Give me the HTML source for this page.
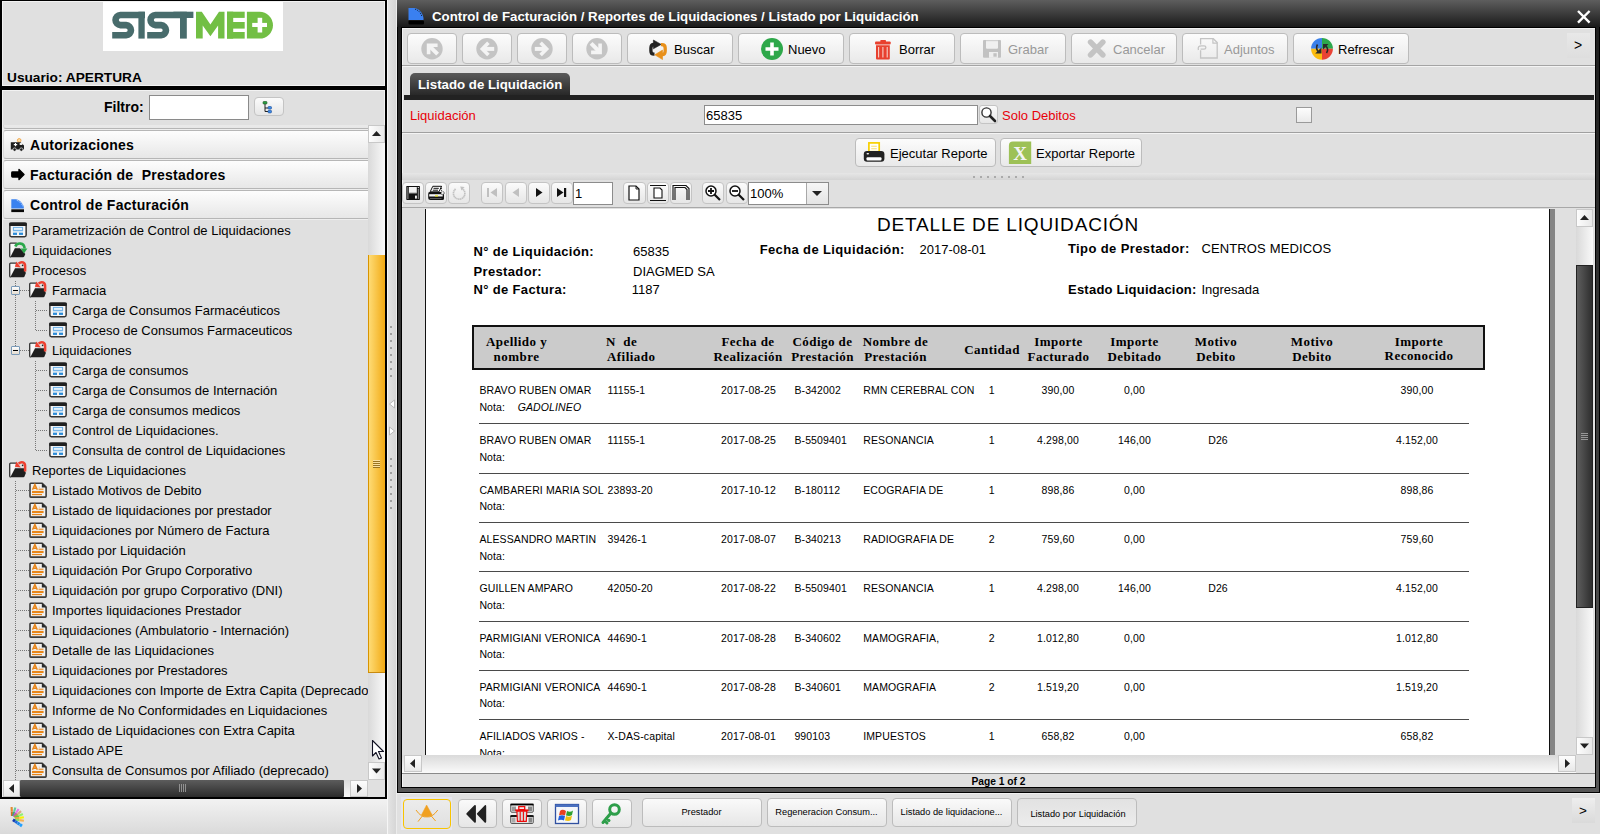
<!DOCTYPE html>
<html><head><meta charset="utf-8">
<style>
*{margin:0;padding:0;box-sizing:border-box}
html,body{width:1600px;height:834px;overflow:hidden;background:#e0e0e0;font-family:"Liberation Sans",sans-serif;color:#000;position:relative}
.a{position:absolute}
.t{position:absolute;white-space:pre}
.btn{position:absolute;border:1px solid #bcbcbc;border-radius:4px;background:linear-gradient(#fcfcfc,#e9e9e9)}
.sbtn{position:absolute;border:1px solid #c4c4c4;border-radius:3px;background:linear-gradient(#fbfbfb,#e6e6e6)}
svg{overflow:visible}
</style></head><body>
<div class="a" style="left:0px;top:0px;width:387px;height:799px;background:#000"></div>
<div class="a" style="left:2px;top:1px;width:383px;height:85px;background:#e0e0e0;border:1px solid #f2f2f2"></div>
<div class="a" style="left:2px;top:90px;width:383px;height:707px;background:#e0e0e0;border-top:1px solid #f2f2f2;border-left:1px solid #f2f2f2;border-right:1px solid #f2f2f2"></div>
<div class="a" style="left:0px;top:799px;width:387px;height:35px;background:linear-gradient(#f2f2f2,#dadada)"></div>
<div class="a" style="left:387px;top:0px;width:10px;height:834px;background:linear-gradient(90deg,#f6f6f6 0,#f6f6f6 1px,#e3e3e3 1px,#d6d6d6 9px,#ececec 9px)"></div>
<svg class="a" style="left:103px;top:2px" width="180" height="49" viewBox="103 2 180 49">
<rect x="103" y="2" width="180" height="49" fill="#fff"/>
<g fill="none" stroke="#486c6c" stroke-width="6.6">
<path d="M145,15 H120.4 A5.08,5.08 0 0 0 120.4,25.15 H126.1 A5.08,5.08 0 0 1 126.1,35.3 H112.2"/>
<path d="M180,15 H155.4 A5.08,5.08 0 0 0 155.4,25.15 H161.1 A5.08,5.08 0 0 1 161.1,35.3 H147.2"/>
</g>
<g fill="#486c6c">
<rect x="138.4" y="11.7" width="6.3" height="26.9"/>
<rect x="173.4" y="11.7" width="20" height="6.3"/>
<rect x="180" y="11.7" width="6.8" height="26.9"/>
</g>
<g fill="#72bf44">
<polygon points="196,11.7 201.8,11.7 210.4,24.6 219,11.7 224.5,11.7 224.5,38.6 218.1,38.6 218.1,25.5 210.4,36.3 202.7,25.5 202.7,38.6 196,38.6"/>
<rect x="227" y="11.7" width="6.2" height="26.9"/>
<rect x="227" y="11.7" width="17.7" height="6.2"/>
<rect x="227" y="22" width="17.7" height="6.6"/>
<rect x="227" y="32" width="17.7" height="6.6"/>
<path d="M246.9,11.7 H259.5 A13.45,13.45 0 0 1 259.5,38.6 H246.9 Z"/>
</g>
<g fill="#fff"><rect x="257.6" y="17.8" width="4.6" height="14.7"/><rect x="252.2" y="22.9" width="14.8" height="4.1"/></g>
</svg>
<div class="t" style="left:7px;top:69.90px;font-size:13.7px;font-weight:700;color:#000;font-family:'Liberation Sans';line-height:normal;">Usuario: APERTURA</div>
<div class="t" style="left:104px;top:99.33px;font-size:14px;font-weight:700;color:#000;font-family:'Liberation Sans';line-height:normal;">Filtro:</div>
<div class="a" style="left:149px;top:95px;width:100px;height:25px;background:#fff;border:1px solid #8a8a8a"></div>
<div class="sbtn" style="left:254px;top:97px;width:30px;height:19px;border-radius:4px"></div>
<svg class="a" style="left:254px;top:97px" width="30" height="19" viewBox="0 0 30 19"><rect x="9" y="4.5" width="4" height="2.5" rx="0.8" fill="#2aa040" stroke="#185020" stroke-width="0.6"/><path d="M11,7 V14.5 H14 M11,11 H14" stroke="#222" stroke-width="1" fill="none"/><rect x="14" y="9.5" width="3.5" height="2.6" rx="0.8" fill="#3a88e8" stroke="#1a4a90" stroke-width="0.6"/><rect x="14" y="13.3" width="3.5" height="2.6" rx="0.8" fill="#3a88e8" stroke="#1a4a90" stroke-width="0.6"/></svg>
<div class="a" style="left:3px;top:125px;width:365px;height:655px;overflow:hidden">
<div class="a" style="left:0px;top:0px;width:365px;height:95px;background:#eeeeee"></div>
<div class="a" style="left:0;top:-25px;width:365px;height:29px;border-top:1px solid #b6b6b6;border-bottom:1px solid #b6b6b6;border-left:1px solid #dadada;border-radius:3px 0 0 3px;background:linear-gradient(#fdfdfd,#e7e7e7)"></div>
<div class="a" style="left:0;top:5px;width:365px;height:29px;border-top:1px solid #b6b6b6;border-bottom:1px solid #b6b6b6;border-left:1px solid #dadada;border-radius:3px 0 0 3px;background:linear-gradient(#fdfdfd,#e7e7e7)"></div>
<div class="a" style="left:5px;top:9px;width:16px;height:29px"><svg width="16" height="28" viewBox="0 0 16 28"><circle cx="11.2" cy="6.4" r="1.8" fill="#f8e0b0" stroke="#f0a040" stroke-width="0.9"/><path d="M2.8,8.2 H12.5 L16,11.5 V15.4 H2.8 Z" fill="#1e1e1e"/><circle cx="6.6" cy="15.6" r="1.7" fill="#1e1e1e" stroke="#eee" stroke-width="0.7"/><circle cx="13.3" cy="15.6" r="1.7" fill="#1e1e1e" stroke="#eee" stroke-width="0.7"/><path d="M5.8,10.6 H9.2 M7.5,8.9 V12.3" stroke="#fff" stroke-width="1.1"/><ellipse cx="13" cy="10.1" rx="1.6" ry="1" fill="#fff"/></svg></div>
<div class="t" style="left:27px;top:12.23px;font-size:14px;font-weight:700;color:#000;font-family:'Liberation Sans';line-height:normal;letter-spacing:0.27px">Autorizaciones</div>
<div class="a" style="left:0;top:35px;width:365px;height:29px;border-top:1px solid #b6b6b6;border-bottom:1px solid #b6b6b6;border-left:1px solid #dadada;border-radius:3px 0 0 3px;background:linear-gradient(#fdfdfd,#e7e7e7)"></div>
<div class="a" style="left:5px;top:35px;width:16px;height:29px"><svg width="16" height="28" viewBox="0 0 16 28"><path d="M4.5,12 H11 V9.5 L16,14.5 L11,19.5 V17 H4.5 Q3.8,17 3.8,16.3 V12.7 Q3.8,12 4.5,12 Z" fill="#000" stroke="#000" stroke-width="1.4" stroke-linejoin="round"/></svg></div>
<div class="t" style="left:27px;top:42.23px;font-size:14px;font-weight:700;color:#000;font-family:'Liberation Sans';line-height:normal;letter-spacing:0.27px">Facturación de  Prestadores</div>
<div class="a" style="left:0;top:65px;width:365px;height:29px;border-top:1px solid #b6b6b6;border-bottom:1px solid #b6b6b6;border-left:1px solid #dadada;border-radius:3px 0 0 3px;background:linear-gradient(#fdfdfd,#e7e7e7)"></div>
<div class="a" style="left:5px;top:71px;width:16px;height:29px"><svg width="16" height="28" viewBox="0 0 16 28"><path d="M3.3,3.3 H8 C11,3.5 14.5,7 15.8,10.5 V12.4 H3.3 Z" fill="#3a82f0"/><path d="M8.8,4.3 C11.5,5.3 13.8,7.6 15,10.4" stroke="#e8f0ff" stroke-width="0.9" stroke-dasharray="1 1" fill="none"/><rect x="3.3" y="13.3" width="12.7" height="2.8" fill="#080808"/></svg></div>
<div class="t" style="left:27px;top:71.83px;font-size:14px;font-weight:700;color:#000;font-family:'Liberation Sans';line-height:normal;letter-spacing:0.27px">Control de Facturación</div>
</div>
<div class="a" style="left:3px;top:219px;width:365px;height:561px;overflow:hidden">
<div class="a" style="left:6px;top:3px;width:19px;height:17px"><svg width="19" height="17" viewBox="0 -8 19 17" style="overflow:visible"><rect x="0.85" y="-6.85" width="16.3" height="13.5" rx="1.6" fill="#f6f6f6" stroke="#333" stroke-width="1.5"/><rect x="0.2" y="-7.6" width="17.6" height="3.7" rx="1" fill="#1e1e1e"/><rect x="4.4" y="-2.6" width="9.2" height="3" fill="#e6f2fb" stroke="#6aaee6" stroke-width="1"/><rect x="4" y="1" width="10" height="1.4" fill="#cfe3f3"/><rect x="4" y="2.7" width="4" height="2.2" fill="#2a8ad8"/><rect x="10" y="2.7" width="4" height="2.2" fill="#2a8ad8"/></svg></div>
<div class="t" style="left:29px;top:3.83px;font-size:13px;font-weight:400;color:#000;font-family:'Liberation Sans';line-height:normal;">Parametrización de Control de Liquidaciones</div>
<div class="a" style="left:6px;top:23px;width:19px;height:17px"><svg width="19" height="17" viewBox="0 -8 19 17" style="overflow:visible"><path d="M7.8,-6.9 H1.6 Q0.7,-6.9 0.7,-6 V6 Q0.7,7 1.7,7" fill="#f8f8f8" stroke="#333" stroke-width="1.3"/><path d="M1.3,7.2 L5.9,-1.8 H10.9 L16.3,4 L15.2,6.4 Q14.8,7.2 14,7.2 Z" fill="#1e1e1e"/><path d="M6.3,-3.5 C8,-7.6 15.3,-7.8 15.6,-1.5" stroke="#2aa84a" stroke-width="2.6" fill="none"/><path d="M11.6,-1.6 H18.4 L15,3.6 Z" fill="#2aa84a"/></svg></div>
<div class="t" style="left:29px;top:23.83px;font-size:13px;font-weight:400;color:#000;font-family:'Liberation Sans';line-height:normal;">Liquidaciones</div>
<div class="a" style="left:6px;top:43px;width:19px;height:17px"><svg width="19" height="17" viewBox="0 -8 19 17" style="overflow:visible"><path d="M7.8,-6.9 H1.6 Q0.7,-6.9 0.7,-6 V6 Q0.7,7 1.7,7" fill="#f8f8f8" stroke="#333" stroke-width="1.3"/><path d="M1.3,7.2 L6.1,-1.7 H14.8 L16.9,2.9 L15.6,6.2 Q15.2,7.2 14.4,7.2 Z" fill="#1e1e1e"/><path d="M16.1,1.6 V-4 C16.1,-7.6 12.6,-9.2 9.6,-6.4" stroke="#ee4030" stroke-width="2.5" fill="none"/><path d="M7.4,-8.6 L5.9,-3.2 L11.8,-2.6 Z" fill="#ee4030"/><circle cx="13.6" cy="-4.6" r="0.8" fill="#222"/></svg></div>
<div class="t" style="left:29px;top:43.84px;font-size:13px;font-weight:400;color:#000;font-family:'Liberation Sans';line-height:normal;">Procesos</div>
<div class="a" style="left:26px;top:63px;width:19px;height:17px"><svg width="19" height="17" viewBox="0 -8 19 17" style="overflow:visible"><path d="M7.8,-6.9 H1.6 Q0.7,-6.9 0.7,-6 V6 Q0.7,7 1.7,7" fill="#f8f8f8" stroke="#333" stroke-width="1.3"/><path d="M1.3,7.2 L6.1,-1.7 H14.8 L16.9,2.9 L15.6,6.2 Q15.2,7.2 14.4,7.2 Z" fill="#1e1e1e"/><path d="M16.1,1.6 V-4 C16.1,-7.6 12.6,-9.2 9.6,-6.4" stroke="#ee4030" stroke-width="2.5" fill="none"/><path d="M7.4,-8.6 L5.9,-3.2 L11.8,-2.6 Z" fill="#ee4030"/><circle cx="13.6" cy="-4.6" r="0.8" fill="#222"/></svg></div>
<div class="t" style="left:49px;top:63.84px;font-size:13px;font-weight:400;color:#000;font-family:'Liberation Sans';line-height:normal;">Farmacia</div>
<div class="a" style="left:46px;top:83px;width:19px;height:17px"><svg width="19" height="17" viewBox="0 -8 19 17" style="overflow:visible"><rect x="0.85" y="-6.85" width="16.3" height="13.5" rx="1.6" fill="#f6f6f6" stroke="#333" stroke-width="1.5"/><rect x="0.2" y="-7.6" width="17.6" height="3.7" rx="1" fill="#1e1e1e"/><rect x="4.4" y="-2.6" width="9.2" height="3" fill="#e6f2fb" stroke="#6aaee6" stroke-width="1"/><rect x="4" y="1" width="10" height="1.4" fill="#cfe3f3"/><rect x="4" y="2.7" width="4" height="2.2" fill="#2a8ad8"/><rect x="10" y="2.7" width="4" height="2.2" fill="#2a8ad8"/></svg></div>
<div class="t" style="left:69px;top:83.84px;font-size:13px;font-weight:400;color:#000;font-family:'Liberation Sans';line-height:normal;">Carga de Consumos Farmacéuticos</div>
<div class="a" style="left:46px;top:103px;width:19px;height:17px"><svg width="19" height="17" viewBox="0 -8 19 17" style="overflow:visible"><rect x="0.85" y="-6.85" width="16.3" height="13.5" rx="1.6" fill="#f6f6f6" stroke="#333" stroke-width="1.5"/><rect x="0.2" y="-7.6" width="17.6" height="3.7" rx="1" fill="#1e1e1e"/><rect x="4.4" y="-2.6" width="9.2" height="3" fill="#e6f2fb" stroke="#6aaee6" stroke-width="1"/><rect x="4" y="1" width="10" height="1.4" fill="#cfe3f3"/><rect x="4" y="2.7" width="4" height="2.2" fill="#2a8ad8"/><rect x="10" y="2.7" width="4" height="2.2" fill="#2a8ad8"/></svg></div>
<div class="t" style="left:69px;top:103.84px;font-size:13px;font-weight:400;color:#000;font-family:'Liberation Sans';line-height:normal;">Proceso de Consumos Farmaceuticos</div>
<div class="a" style="left:26px;top:123px;width:19px;height:17px"><svg width="19" height="17" viewBox="0 -8 19 17" style="overflow:visible"><path d="M7.8,-6.9 H1.6 Q0.7,-6.9 0.7,-6 V6 Q0.7,7 1.7,7" fill="#f8f8f8" stroke="#333" stroke-width="1.3"/><path d="M1.3,7.2 L6.1,-1.7 H14.8 L16.9,2.9 L15.6,6.2 Q15.2,7.2 14.4,7.2 Z" fill="#1e1e1e"/><path d="M16.1,1.6 V-4 C16.1,-7.6 12.6,-9.2 9.6,-6.4" stroke="#ee4030" stroke-width="2.5" fill="none"/><path d="M7.4,-8.6 L5.9,-3.2 L11.8,-2.6 Z" fill="#ee4030"/><circle cx="13.6" cy="-4.6" r="0.8" fill="#222"/></svg></div>
<div class="t" style="left:49px;top:123.84px;font-size:13px;font-weight:400;color:#000;font-family:'Liberation Sans';line-height:normal;">Liquidaciones</div>
<div class="a" style="left:46px;top:143px;width:19px;height:17px"><svg width="19" height="17" viewBox="0 -8 19 17" style="overflow:visible"><rect x="0.85" y="-6.85" width="16.3" height="13.5" rx="1.6" fill="#f6f6f6" stroke="#333" stroke-width="1.5"/><rect x="0.2" y="-7.6" width="17.6" height="3.7" rx="1" fill="#1e1e1e"/><rect x="4.4" y="-2.6" width="9.2" height="3" fill="#e6f2fb" stroke="#6aaee6" stroke-width="1"/><rect x="4" y="1" width="10" height="1.4" fill="#cfe3f3"/><rect x="4" y="2.7" width="4" height="2.2" fill="#2a8ad8"/><rect x="10" y="2.7" width="4" height="2.2" fill="#2a8ad8"/></svg></div>
<div class="t" style="left:69px;top:143.84px;font-size:13px;font-weight:400;color:#000;font-family:'Liberation Sans';line-height:normal;">Carga de consumos</div>
<div class="a" style="left:46px;top:163px;width:19px;height:17px"><svg width="19" height="17" viewBox="0 -8 19 17" style="overflow:visible"><rect x="0.85" y="-6.85" width="16.3" height="13.5" rx="1.6" fill="#f6f6f6" stroke="#333" stroke-width="1.5"/><rect x="0.2" y="-7.6" width="17.6" height="3.7" rx="1" fill="#1e1e1e"/><rect x="4.4" y="-2.6" width="9.2" height="3" fill="#e6f2fb" stroke="#6aaee6" stroke-width="1"/><rect x="4" y="1" width="10" height="1.4" fill="#cfe3f3"/><rect x="4" y="2.7" width="4" height="2.2" fill="#2a8ad8"/><rect x="10" y="2.7" width="4" height="2.2" fill="#2a8ad8"/></svg></div>
<div class="t" style="left:69px;top:163.84px;font-size:13px;font-weight:400;color:#000;font-family:'Liberation Sans';line-height:normal;">Carga de Consumos de Internación</div>
<div class="a" style="left:46px;top:183px;width:19px;height:17px"><svg width="19" height="17" viewBox="0 -8 19 17" style="overflow:visible"><rect x="0.85" y="-6.85" width="16.3" height="13.5" rx="1.6" fill="#f6f6f6" stroke="#333" stroke-width="1.5"/><rect x="0.2" y="-7.6" width="17.6" height="3.7" rx="1" fill="#1e1e1e"/><rect x="4.4" y="-2.6" width="9.2" height="3" fill="#e6f2fb" stroke="#6aaee6" stroke-width="1"/><rect x="4" y="1" width="10" height="1.4" fill="#cfe3f3"/><rect x="4" y="2.7" width="4" height="2.2" fill="#2a8ad8"/><rect x="10" y="2.7" width="4" height="2.2" fill="#2a8ad8"/></svg></div>
<div class="t" style="left:69px;top:183.84px;font-size:13px;font-weight:400;color:#000;font-family:'Liberation Sans';line-height:normal;">Carga de consumos medicos</div>
<div class="a" style="left:46px;top:203px;width:19px;height:17px"><svg width="19" height="17" viewBox="0 -8 19 17" style="overflow:visible"><rect x="0.85" y="-6.85" width="16.3" height="13.5" rx="1.6" fill="#f6f6f6" stroke="#333" stroke-width="1.5"/><rect x="0.2" y="-7.6" width="17.6" height="3.7" rx="1" fill="#1e1e1e"/><rect x="4.4" y="-2.6" width="9.2" height="3" fill="#e6f2fb" stroke="#6aaee6" stroke-width="1"/><rect x="4" y="1" width="10" height="1.4" fill="#cfe3f3"/><rect x="4" y="2.7" width="4" height="2.2" fill="#2a8ad8"/><rect x="10" y="2.7" width="4" height="2.2" fill="#2a8ad8"/></svg></div>
<div class="t" style="left:69px;top:203.84px;font-size:13px;font-weight:400;color:#000;font-family:'Liberation Sans';line-height:normal;">Control de Liquidaciones.</div>
<div class="a" style="left:46px;top:223px;width:19px;height:17px"><svg width="19" height="17" viewBox="0 -8 19 17" style="overflow:visible"><rect x="0.85" y="-6.85" width="16.3" height="13.5" rx="1.6" fill="#f6f6f6" stroke="#333" stroke-width="1.5"/><rect x="0.2" y="-7.6" width="17.6" height="3.7" rx="1" fill="#1e1e1e"/><rect x="4.4" y="-2.6" width="9.2" height="3" fill="#e6f2fb" stroke="#6aaee6" stroke-width="1"/><rect x="4" y="1" width="10" height="1.4" fill="#cfe3f3"/><rect x="4" y="2.7" width="4" height="2.2" fill="#2a8ad8"/><rect x="10" y="2.7" width="4" height="2.2" fill="#2a8ad8"/></svg></div>
<div class="t" style="left:69px;top:223.84px;font-size:13px;font-weight:400;color:#000;font-family:'Liberation Sans';line-height:normal;">Consulta de control de Liquidaciones</div>
<div class="a" style="left:6px;top:243px;width:19px;height:17px"><svg width="19" height="17" viewBox="0 -8 19 17" style="overflow:visible"><path d="M7.8,-6.9 H1.6 Q0.7,-6.9 0.7,-6 V6 Q0.7,7 1.7,7" fill="#f8f8f8" stroke="#333" stroke-width="1.3"/><path d="M1.3,7.2 L6.1,-1.7 H14.8 L16.9,2.9 L15.6,6.2 Q15.2,7.2 14.4,7.2 Z" fill="#1e1e1e"/><path d="M16.1,1.6 V-4 C16.1,-7.6 12.6,-9.2 9.6,-6.4" stroke="#ee4030" stroke-width="2.5" fill="none"/><path d="M7.4,-8.6 L5.9,-3.2 L11.8,-2.6 Z" fill="#ee4030"/><circle cx="13.6" cy="-4.6" r="0.8" fill="#222"/></svg></div>
<div class="t" style="left:29px;top:243.84px;font-size:13px;font-weight:400;color:#000;font-family:'Liberation Sans';line-height:normal;">Reportes de Liquidaciones</div>
<div class="a" style="left:26px;top:263px;width:19px;height:17px"><svg width="19" height="17" viewBox="0 -8 19 17" style="overflow:visible"><path d="M1.8,-6.8 H13.2 L17.1,-2.9 V6.3 Q17.1,7.1 16.3,7.1 H1.8 Q1,7.1 1,6.3 V-6 Q1,-6.8 1.8,-6.8 Z" fill="#f1f1f1" stroke="#3a3a3a" stroke-width="1.6" stroke-linejoin="round"/><path d="M12.8,-7 L17.3,-2.5 L12.8,-2.5 Z" fill="#2a2a2a"/><path d="M3.5,-0.2 L5.9,-5.4 L8.3,-0.2 M4.5,-1.8 H7.3" stroke="#e8861a" stroke-width="1.5" fill="none"/><path d="M9.5,-0.8 H14.5" stroke="#e8861a" stroke-width="1.1"/><path d="M9.8,-2.8 H11" stroke="#f0b070" stroke-width="0.8"/><path d="M3,2 H14.6" stroke="#e8861a" stroke-width="2.2"/><path d="M3,4.6 H13" stroke="#e8861a" stroke-width="1.2"/></svg></div>
<div class="t" style="left:49px;top:263.84px;font-size:13px;font-weight:400;color:#000;font-family:'Liberation Sans';line-height:normal;">Listado Motivos de Debito</div>
<div class="a" style="left:26px;top:283px;width:19px;height:17px"><svg width="19" height="17" viewBox="0 -8 19 17" style="overflow:visible"><path d="M1.8,-6.8 H13.2 L17.1,-2.9 V6.3 Q17.1,7.1 16.3,7.1 H1.8 Q1,7.1 1,6.3 V-6 Q1,-6.8 1.8,-6.8 Z" fill="#f1f1f1" stroke="#3a3a3a" stroke-width="1.6" stroke-linejoin="round"/><path d="M12.8,-7 L17.3,-2.5 L12.8,-2.5 Z" fill="#2a2a2a"/><path d="M3.5,-0.2 L5.9,-5.4 L8.3,-0.2 M4.5,-1.8 H7.3" stroke="#e8861a" stroke-width="1.5" fill="none"/><path d="M9.5,-0.8 H14.5" stroke="#e8861a" stroke-width="1.1"/><path d="M9.8,-2.8 H11" stroke="#f0b070" stroke-width="0.8"/><path d="M3,2 H14.6" stroke="#e8861a" stroke-width="2.2"/><path d="M3,4.6 H13" stroke="#e8861a" stroke-width="1.2"/></svg></div>
<div class="t" style="left:49px;top:283.84px;font-size:13px;font-weight:400;color:#000;font-family:'Liberation Sans';line-height:normal;">Listado de liquidaciones por prestador</div>
<div class="a" style="left:26px;top:303px;width:19px;height:17px"><svg width="19" height="17" viewBox="0 -8 19 17" style="overflow:visible"><path d="M1.8,-6.8 H13.2 L17.1,-2.9 V6.3 Q17.1,7.1 16.3,7.1 H1.8 Q1,7.1 1,6.3 V-6 Q1,-6.8 1.8,-6.8 Z" fill="#f1f1f1" stroke="#3a3a3a" stroke-width="1.6" stroke-linejoin="round"/><path d="M12.8,-7 L17.3,-2.5 L12.8,-2.5 Z" fill="#2a2a2a"/><path d="M3.5,-0.2 L5.9,-5.4 L8.3,-0.2 M4.5,-1.8 H7.3" stroke="#e8861a" stroke-width="1.5" fill="none"/><path d="M9.5,-0.8 H14.5" stroke="#e8861a" stroke-width="1.1"/><path d="M9.8,-2.8 H11" stroke="#f0b070" stroke-width="0.8"/><path d="M3,2 H14.6" stroke="#e8861a" stroke-width="2.2"/><path d="M3,4.6 H13" stroke="#e8861a" stroke-width="1.2"/></svg></div>
<div class="t" style="left:49px;top:303.84px;font-size:13px;font-weight:400;color:#000;font-family:'Liberation Sans';line-height:normal;">Liquidaciones por Número de Factura</div>
<div class="a" style="left:26px;top:323px;width:19px;height:17px"><svg width="19" height="17" viewBox="0 -8 19 17" style="overflow:visible"><path d="M1.8,-6.8 H13.2 L17.1,-2.9 V6.3 Q17.1,7.1 16.3,7.1 H1.8 Q1,7.1 1,6.3 V-6 Q1,-6.8 1.8,-6.8 Z" fill="#f1f1f1" stroke="#3a3a3a" stroke-width="1.6" stroke-linejoin="round"/><path d="M12.8,-7 L17.3,-2.5 L12.8,-2.5 Z" fill="#2a2a2a"/><path d="M3.5,-0.2 L5.9,-5.4 L8.3,-0.2 M4.5,-1.8 H7.3" stroke="#e8861a" stroke-width="1.5" fill="none"/><path d="M9.5,-0.8 H14.5" stroke="#e8861a" stroke-width="1.1"/><path d="M9.8,-2.8 H11" stroke="#f0b070" stroke-width="0.8"/><path d="M3,2 H14.6" stroke="#e8861a" stroke-width="2.2"/><path d="M3,4.6 H13" stroke="#e8861a" stroke-width="1.2"/></svg></div>
<div class="t" style="left:49px;top:323.84px;font-size:13px;font-weight:400;color:#000;font-family:'Liberation Sans';line-height:normal;">Listado por Liquidación</div>
<div class="a" style="left:26px;top:343px;width:19px;height:17px"><svg width="19" height="17" viewBox="0 -8 19 17" style="overflow:visible"><path d="M1.8,-6.8 H13.2 L17.1,-2.9 V6.3 Q17.1,7.1 16.3,7.1 H1.8 Q1,7.1 1,6.3 V-6 Q1,-6.8 1.8,-6.8 Z" fill="#f1f1f1" stroke="#3a3a3a" stroke-width="1.6" stroke-linejoin="round"/><path d="M12.8,-7 L17.3,-2.5 L12.8,-2.5 Z" fill="#2a2a2a"/><path d="M3.5,-0.2 L5.9,-5.4 L8.3,-0.2 M4.5,-1.8 H7.3" stroke="#e8861a" stroke-width="1.5" fill="none"/><path d="M9.5,-0.8 H14.5" stroke="#e8861a" stroke-width="1.1"/><path d="M9.8,-2.8 H11" stroke="#f0b070" stroke-width="0.8"/><path d="M3,2 H14.6" stroke="#e8861a" stroke-width="2.2"/><path d="M3,4.6 H13" stroke="#e8861a" stroke-width="1.2"/></svg></div>
<div class="t" style="left:49px;top:343.84px;font-size:13px;font-weight:400;color:#000;font-family:'Liberation Sans';line-height:normal;">Liquidación Por Grupo Corporativo</div>
<div class="a" style="left:26px;top:363px;width:19px;height:17px"><svg width="19" height="17" viewBox="0 -8 19 17" style="overflow:visible"><path d="M1.8,-6.8 H13.2 L17.1,-2.9 V6.3 Q17.1,7.1 16.3,7.1 H1.8 Q1,7.1 1,6.3 V-6 Q1,-6.8 1.8,-6.8 Z" fill="#f1f1f1" stroke="#3a3a3a" stroke-width="1.6" stroke-linejoin="round"/><path d="M12.8,-7 L17.3,-2.5 L12.8,-2.5 Z" fill="#2a2a2a"/><path d="M3.5,-0.2 L5.9,-5.4 L8.3,-0.2 M4.5,-1.8 H7.3" stroke="#e8861a" stroke-width="1.5" fill="none"/><path d="M9.5,-0.8 H14.5" stroke="#e8861a" stroke-width="1.1"/><path d="M9.8,-2.8 H11" stroke="#f0b070" stroke-width="0.8"/><path d="M3,2 H14.6" stroke="#e8861a" stroke-width="2.2"/><path d="M3,4.6 H13" stroke="#e8861a" stroke-width="1.2"/></svg></div>
<div class="t" style="left:49px;top:363.84px;font-size:13px;font-weight:400;color:#000;font-family:'Liberation Sans';line-height:normal;">Liquidación por grupo Corporativo (DNI)</div>
<div class="a" style="left:26px;top:383px;width:19px;height:17px"><svg width="19" height="17" viewBox="0 -8 19 17" style="overflow:visible"><path d="M1.8,-6.8 H13.2 L17.1,-2.9 V6.3 Q17.1,7.1 16.3,7.1 H1.8 Q1,7.1 1,6.3 V-6 Q1,-6.8 1.8,-6.8 Z" fill="#f1f1f1" stroke="#3a3a3a" stroke-width="1.6" stroke-linejoin="round"/><path d="M12.8,-7 L17.3,-2.5 L12.8,-2.5 Z" fill="#2a2a2a"/><path d="M3.5,-0.2 L5.9,-5.4 L8.3,-0.2 M4.5,-1.8 H7.3" stroke="#e8861a" stroke-width="1.5" fill="none"/><path d="M9.5,-0.8 H14.5" stroke="#e8861a" stroke-width="1.1"/><path d="M9.8,-2.8 H11" stroke="#f0b070" stroke-width="0.8"/><path d="M3,2 H14.6" stroke="#e8861a" stroke-width="2.2"/><path d="M3,4.6 H13" stroke="#e8861a" stroke-width="1.2"/></svg></div>
<div class="t" style="left:49px;top:383.84px;font-size:13px;font-weight:400;color:#000;font-family:'Liberation Sans';line-height:normal;">Importes liquidaciones Prestador</div>
<div class="a" style="left:26px;top:403px;width:19px;height:17px"><svg width="19" height="17" viewBox="0 -8 19 17" style="overflow:visible"><path d="M1.8,-6.8 H13.2 L17.1,-2.9 V6.3 Q17.1,7.1 16.3,7.1 H1.8 Q1,7.1 1,6.3 V-6 Q1,-6.8 1.8,-6.8 Z" fill="#f1f1f1" stroke="#3a3a3a" stroke-width="1.6" stroke-linejoin="round"/><path d="M12.8,-7 L17.3,-2.5 L12.8,-2.5 Z" fill="#2a2a2a"/><path d="M3.5,-0.2 L5.9,-5.4 L8.3,-0.2 M4.5,-1.8 H7.3" stroke="#e8861a" stroke-width="1.5" fill="none"/><path d="M9.5,-0.8 H14.5" stroke="#e8861a" stroke-width="1.1"/><path d="M9.8,-2.8 H11" stroke="#f0b070" stroke-width="0.8"/><path d="M3,2 H14.6" stroke="#e8861a" stroke-width="2.2"/><path d="M3,4.6 H13" stroke="#e8861a" stroke-width="1.2"/></svg></div>
<div class="t" style="left:49px;top:403.84px;font-size:13px;font-weight:400;color:#000;font-family:'Liberation Sans';line-height:normal;">Liquidaciones (Ambulatorio - Internación)</div>
<div class="a" style="left:26px;top:423px;width:19px;height:17px"><svg width="19" height="17" viewBox="0 -8 19 17" style="overflow:visible"><path d="M1.8,-6.8 H13.2 L17.1,-2.9 V6.3 Q17.1,7.1 16.3,7.1 H1.8 Q1,7.1 1,6.3 V-6 Q1,-6.8 1.8,-6.8 Z" fill="#f1f1f1" stroke="#3a3a3a" stroke-width="1.6" stroke-linejoin="round"/><path d="M12.8,-7 L17.3,-2.5 L12.8,-2.5 Z" fill="#2a2a2a"/><path d="M3.5,-0.2 L5.9,-5.4 L8.3,-0.2 M4.5,-1.8 H7.3" stroke="#e8861a" stroke-width="1.5" fill="none"/><path d="M9.5,-0.8 H14.5" stroke="#e8861a" stroke-width="1.1"/><path d="M9.8,-2.8 H11" stroke="#f0b070" stroke-width="0.8"/><path d="M3,2 H14.6" stroke="#e8861a" stroke-width="2.2"/><path d="M3,4.6 H13" stroke="#e8861a" stroke-width="1.2"/></svg></div>
<div class="t" style="left:49px;top:423.84px;font-size:13px;font-weight:400;color:#000;font-family:'Liberation Sans';line-height:normal;">Detalle de las Liquidaciones</div>
<div class="a" style="left:26px;top:443px;width:19px;height:17px"><svg width="19" height="17" viewBox="0 -8 19 17" style="overflow:visible"><path d="M1.8,-6.8 H13.2 L17.1,-2.9 V6.3 Q17.1,7.1 16.3,7.1 H1.8 Q1,7.1 1,6.3 V-6 Q1,-6.8 1.8,-6.8 Z" fill="#f1f1f1" stroke="#3a3a3a" stroke-width="1.6" stroke-linejoin="round"/><path d="M12.8,-7 L17.3,-2.5 L12.8,-2.5 Z" fill="#2a2a2a"/><path d="M3.5,-0.2 L5.9,-5.4 L8.3,-0.2 M4.5,-1.8 H7.3" stroke="#e8861a" stroke-width="1.5" fill="none"/><path d="M9.5,-0.8 H14.5" stroke="#e8861a" stroke-width="1.1"/><path d="M9.8,-2.8 H11" stroke="#f0b070" stroke-width="0.8"/><path d="M3,2 H14.6" stroke="#e8861a" stroke-width="2.2"/><path d="M3,4.6 H13" stroke="#e8861a" stroke-width="1.2"/></svg></div>
<div class="t" style="left:49px;top:443.84px;font-size:13px;font-weight:400;color:#000;font-family:'Liberation Sans';line-height:normal;">Liquidaciones por Prestadores</div>
<div class="a" style="left:26px;top:463px;width:19px;height:17px"><svg width="19" height="17" viewBox="0 -8 19 17" style="overflow:visible"><path d="M1.8,-6.8 H13.2 L17.1,-2.9 V6.3 Q17.1,7.1 16.3,7.1 H1.8 Q1,7.1 1,6.3 V-6 Q1,-6.8 1.8,-6.8 Z" fill="#f1f1f1" stroke="#3a3a3a" stroke-width="1.6" stroke-linejoin="round"/><path d="M12.8,-7 L17.3,-2.5 L12.8,-2.5 Z" fill="#2a2a2a"/><path d="M3.5,-0.2 L5.9,-5.4 L8.3,-0.2 M4.5,-1.8 H7.3" stroke="#e8861a" stroke-width="1.5" fill="none"/><path d="M9.5,-0.8 H14.5" stroke="#e8861a" stroke-width="1.1"/><path d="M9.8,-2.8 H11" stroke="#f0b070" stroke-width="0.8"/><path d="M3,2 H14.6" stroke="#e8861a" stroke-width="2.2"/><path d="M3,4.6 H13" stroke="#e8861a" stroke-width="1.2"/></svg></div>
<div class="t" style="left:49px;top:463.84px;font-size:13px;font-weight:400;color:#000;font-family:'Liberation Sans';line-height:normal;">Liquidaciones con Importe de Extra Capita (Deprecado)</div>
<div class="a" style="left:26px;top:483px;width:19px;height:17px"><svg width="19" height="17" viewBox="0 -8 19 17" style="overflow:visible"><path d="M1.8,-6.8 H13.2 L17.1,-2.9 V6.3 Q17.1,7.1 16.3,7.1 H1.8 Q1,7.1 1,6.3 V-6 Q1,-6.8 1.8,-6.8 Z" fill="#f1f1f1" stroke="#3a3a3a" stroke-width="1.6" stroke-linejoin="round"/><path d="M12.8,-7 L17.3,-2.5 L12.8,-2.5 Z" fill="#2a2a2a"/><path d="M3.5,-0.2 L5.9,-5.4 L8.3,-0.2 M4.5,-1.8 H7.3" stroke="#e8861a" stroke-width="1.5" fill="none"/><path d="M9.5,-0.8 H14.5" stroke="#e8861a" stroke-width="1.1"/><path d="M9.8,-2.8 H11" stroke="#f0b070" stroke-width="0.8"/><path d="M3,2 H14.6" stroke="#e8861a" stroke-width="2.2"/><path d="M3,4.6 H13" stroke="#e8861a" stroke-width="1.2"/></svg></div>
<div class="t" style="left:49px;top:483.84px;font-size:13px;font-weight:400;color:#000;font-family:'Liberation Sans';line-height:normal;">Informe de No Conformidades en Liquidaciones</div>
<div class="a" style="left:26px;top:503px;width:19px;height:17px"><svg width="19" height="17" viewBox="0 -8 19 17" style="overflow:visible"><path d="M1.8,-6.8 H13.2 L17.1,-2.9 V6.3 Q17.1,7.1 16.3,7.1 H1.8 Q1,7.1 1,6.3 V-6 Q1,-6.8 1.8,-6.8 Z" fill="#f1f1f1" stroke="#3a3a3a" stroke-width="1.6" stroke-linejoin="round"/><path d="M12.8,-7 L17.3,-2.5 L12.8,-2.5 Z" fill="#2a2a2a"/><path d="M3.5,-0.2 L5.9,-5.4 L8.3,-0.2 M4.5,-1.8 H7.3" stroke="#e8861a" stroke-width="1.5" fill="none"/><path d="M9.5,-0.8 H14.5" stroke="#e8861a" stroke-width="1.1"/><path d="M9.8,-2.8 H11" stroke="#f0b070" stroke-width="0.8"/><path d="M3,2 H14.6" stroke="#e8861a" stroke-width="2.2"/><path d="M3,4.6 H13" stroke="#e8861a" stroke-width="1.2"/></svg></div>
<div class="t" style="left:49px;top:503.84px;font-size:13px;font-weight:400;color:#000;font-family:'Liberation Sans';line-height:normal;">Listado de Liquidaciones con Extra Capita</div>
<div class="a" style="left:26px;top:523px;width:19px;height:17px"><svg width="19" height="17" viewBox="0 -8 19 17" style="overflow:visible"><path d="M1.8,-6.8 H13.2 L17.1,-2.9 V6.3 Q17.1,7.1 16.3,7.1 H1.8 Q1,7.1 1,6.3 V-6 Q1,-6.8 1.8,-6.8 Z" fill="#f1f1f1" stroke="#3a3a3a" stroke-width="1.6" stroke-linejoin="round"/><path d="M12.8,-7 L17.3,-2.5 L12.8,-2.5 Z" fill="#2a2a2a"/><path d="M3.5,-0.2 L5.9,-5.4 L8.3,-0.2 M4.5,-1.8 H7.3" stroke="#e8861a" stroke-width="1.5" fill="none"/><path d="M9.5,-0.8 H14.5" stroke="#e8861a" stroke-width="1.1"/><path d="M9.8,-2.8 H11" stroke="#f0b070" stroke-width="0.8"/><path d="M3,2 H14.6" stroke="#e8861a" stroke-width="2.2"/><path d="M3,4.6 H13" stroke="#e8861a" stroke-width="1.2"/></svg></div>
<div class="t" style="left:49px;top:523.84px;font-size:13px;font-weight:400;color:#000;font-family:'Liberation Sans';line-height:normal;">Listado APE</div>
<div class="a" style="left:26px;top:543px;width:19px;height:17px"><svg width="19" height="17" viewBox="0 -8 19 17" style="overflow:visible"><path d="M1.8,-6.8 H13.2 L17.1,-2.9 V6.3 Q17.1,7.1 16.3,7.1 H1.8 Q1,7.1 1,6.3 V-6 Q1,-6.8 1.8,-6.8 Z" fill="#f1f1f1" stroke="#3a3a3a" stroke-width="1.6" stroke-linejoin="round"/><path d="M12.8,-7 L17.3,-2.5 L12.8,-2.5 Z" fill="#2a2a2a"/><path d="M3.5,-0.2 L5.9,-5.4 L8.3,-0.2 M4.5,-1.8 H7.3" stroke="#e8861a" stroke-width="1.5" fill="none"/><path d="M9.5,-0.8 H14.5" stroke="#e8861a" stroke-width="1.1"/><path d="M9.8,-2.8 H11" stroke="#f0b070" stroke-width="0.8"/><path d="M3,2 H14.6" stroke="#e8861a" stroke-width="2.2"/><path d="M3,4.6 H13" stroke="#e8861a" stroke-width="1.2"/></svg></div>
<div class="t" style="left:49px;top:543.84px;font-size:13px;font-weight:400;color:#000;font-family:'Liberation Sans';line-height:normal;">Consulta de Consumos por Afiliado (deprecado)</div>
<div class="a" style="left:12px;top:62px;width:1px;height:70px;background:repeating-linear-gradient(#777 0 1px,transparent 1px 2px)"></div>
<div class="a" style="left:17px;top:71px;width:9px;height:1px;background:repeating-linear-gradient(90deg,#777 0 1px,transparent 1px 2px)"></div>
<div class="a" style="left:17px;top:131px;width:9px;height:1px;background:repeating-linear-gradient(90deg,#777 0 1px,transparent 1px 2px)"></div>
<div class="a" style="left:32px;top:82px;width:1px;height:30px;background:repeating-linear-gradient(#777 0 1px,transparent 1px 2px)"></div>
<div class="a" style="left:32px;top:142px;width:1px;height:90px;background:repeating-linear-gradient(#777 0 1px,transparent 1px 2px)"></div>
<div class="a" style="left:33px;top:91px;width:12px;height:1px;background:repeating-linear-gradient(90deg,#777 0 1px,transparent 1px 2px)"></div>
<div class="a" style="left:33px;top:111px;width:12px;height:1px;background:repeating-linear-gradient(90deg,#777 0 1px,transparent 1px 2px)"></div>
<div class="a" style="left:33px;top:151px;width:12px;height:1px;background:repeating-linear-gradient(90deg,#777 0 1px,transparent 1px 2px)"></div>
<div class="a" style="left:33px;top:171px;width:12px;height:1px;background:repeating-linear-gradient(90deg,#777 0 1px,transparent 1px 2px)"></div>
<div class="a" style="left:33px;top:191px;width:12px;height:1px;background:repeating-linear-gradient(90deg,#777 0 1px,transparent 1px 2px)"></div>
<div class="a" style="left:33px;top:211px;width:12px;height:1px;background:repeating-linear-gradient(90deg,#777 0 1px,transparent 1px 2px)"></div>
<div class="a" style="left:33px;top:231px;width:12px;height:1px;background:repeating-linear-gradient(90deg,#777 0 1px,transparent 1px 2px)"></div>
<div class="a" style="left:12px;top:262px;width:1px;height:299px;background:repeating-linear-gradient(#777 0 1px,transparent 1px 2px)"></div>
<div class="a" style="left:13px;top:271px;width:13px;height:1px;background:repeating-linear-gradient(90deg,#777 0 1px,transparent 1px 2px)"></div>
<div class="a" style="left:13px;top:291px;width:13px;height:1px;background:repeating-linear-gradient(90deg,#777 0 1px,transparent 1px 2px)"></div>
<div class="a" style="left:13px;top:311px;width:13px;height:1px;background:repeating-linear-gradient(90deg,#777 0 1px,transparent 1px 2px)"></div>
<div class="a" style="left:13px;top:331px;width:13px;height:1px;background:repeating-linear-gradient(90deg,#777 0 1px,transparent 1px 2px)"></div>
<div class="a" style="left:13px;top:351px;width:13px;height:1px;background:repeating-linear-gradient(90deg,#777 0 1px,transparent 1px 2px)"></div>
<div class="a" style="left:13px;top:371px;width:13px;height:1px;background:repeating-linear-gradient(90deg,#777 0 1px,transparent 1px 2px)"></div>
<div class="a" style="left:13px;top:391px;width:13px;height:1px;background:repeating-linear-gradient(90deg,#777 0 1px,transparent 1px 2px)"></div>
<div class="a" style="left:13px;top:411px;width:13px;height:1px;background:repeating-linear-gradient(90deg,#777 0 1px,transparent 1px 2px)"></div>
<div class="a" style="left:13px;top:431px;width:13px;height:1px;background:repeating-linear-gradient(90deg,#777 0 1px,transparent 1px 2px)"></div>
<div class="a" style="left:13px;top:451px;width:13px;height:1px;background:repeating-linear-gradient(90deg,#777 0 1px,transparent 1px 2px)"></div>
<div class="a" style="left:13px;top:471px;width:13px;height:1px;background:repeating-linear-gradient(90deg,#777 0 1px,transparent 1px 2px)"></div>
<div class="a" style="left:13px;top:491px;width:13px;height:1px;background:repeating-linear-gradient(90deg,#777 0 1px,transparent 1px 2px)"></div>
<div class="a" style="left:13px;top:511px;width:13px;height:1px;background:repeating-linear-gradient(90deg,#777 0 1px,transparent 1px 2px)"></div>
<div class="a" style="left:13px;top:531px;width:13px;height:1px;background:repeating-linear-gradient(90deg,#777 0 1px,transparent 1px 2px)"></div>
<div class="a" style="left:13px;top:551px;width:13px;height:1px;background:repeating-linear-gradient(90deg,#777 0 1px,transparent 1px 2px)"></div>
<div class="a" style="left:8px;top:67px;width:9px;height:9px;border:1px solid #7a9ab8;border-radius:1px;background:linear-gradient(#fdfdfd,#e4dcd0)"></div>
<div class="a" style="left:10px;top:71px;width:5px;height:1px;background:#000"></div>
<div class="a" style="left:8px;top:127px;width:9px;height:9px;border:1px solid #7a9ab8;border-radius:1px;background:linear-gradient(#fdfdfd,#e4dcd0)"></div>
<div class="a" style="left:10px;top:131px;width:5px;height:1px;background:#000"></div>
</div>
<div class="a" style="left:368px;top:125px;width:17px;height:655px;background:linear-gradient(90deg,#d9d9d9,#f9f9f9)"></div>
<div class="a" style="left:368px;top:125px;width:17px;height:18px;border:1px solid #c8c8c8;background:linear-gradient(90deg,#fdfdfd,#e8e8e8)"></div>
<svg class="a" style="left:368px;top:125px" width="17" height="18" viewBox="0 0 17 18"><path d="M4,11 L8.5,6 L13,11 Z" fill="#222"/></svg>
<div class="a" style="left:368px;top:255px;width:17px;height:418px;background:linear-gradient(90deg,#fedb74,#f2aa14);border-bottom:1px solid #c88a10;border-left:1px solid #d89400"></div>
<svg class="a" style="left:368px;top:455px" width="17" height="18" viewBox="368 455 17 18"><path d="M373,460.5 H380 M373,462.5 H380 M373,464.5 H380 M373,466.5 H380" stroke="#fbe0a0" stroke-width="1"/><path d="M373,461.5 H380 M373,463.5 H380 M373,465.5 H380 M373,467.5 H380" stroke="#9a7420" stroke-width="1"/></svg>
<div class="a" style="left:368px;top:762px;width:17px;height:18px;border:1px solid #c8c8c8;background:linear-gradient(90deg,#fdfdfd,#e8e8e8)"></div>
<svg class="a" style="left:368px;top:762px" width="17" height="18" viewBox="0 0 17 18"><path d="M4,6.5 L8.5,11.5 L13,6.5 Z" fill="#222"/></svg>
<div class="a" style="left:3px;top:780px;width:365px;height:17px;background:linear-gradient(#dcdcdc,#f8f8f8)"></div>
<div class="a" style="left:3px;top:780px;width:17px;height:17px;border:1px solid #c8c8c8;background:linear-gradient(#fdfdfd,#e8e8e8)"></div>
<svg class="a" style="left:3px;top:780px" width="17" height="17" viewBox="0 0 17 17"><path d="M11,4 L6,8.5 L11,13 Z" fill="#222"/></svg>
<div class="a" style="left:20px;top:780px;width:324px;height:17px;background:linear-gradient(#5c5c5c,#2c2c2c);border-radius:1px"></div>
<svg class="a" style="left:176px;top:783px" width="12" height="10" viewBox="0 0 12 10"><path d="M3.5,1 V9 M5.5,1 V9 M7.5,1 V9 M9.5,1 V9" stroke="#999" stroke-width="0.9"/></svg>
<div class="a" style="left:350px;top:780px;width:18px;height:17px;border:1px solid #c8c8c8;background:linear-gradient(#fdfdfd,#e8e8e8)"></div>
<svg class="a" style="left:350px;top:780px" width="18" height="17" viewBox="0 0 18 17"><path d="M7,4 L12,8.5 L7,13 Z" fill="#222"/></svg>
<div class="a" style="left:368px;top:780px;width:17px;height:17px;background:#e0e0e0"></div>
<svg class="a" style="left:371px;top:739px" width="15" height="22" viewBox="0 0 15 22"><path d="M1.5,1.5 V17 L5,13.5 L8,20 L10.5,19 L7.5,12.5 H12.5 Z" fill="#fff" stroke="#112" stroke-width="1.1" stroke-linejoin="round"/></svg>
<svg class="a" style="left:4px;top:802px" width="28" height="28" viewBox="4 802 28 28"><g transform="rotate(-92 12 819)"><rect x="15" y="818" width="4.5" height="2.1" fill="#d07020"/><rect x="19.5" y="818" width="4.5" height="2.1" fill="#e08a30"/></g><g transform="rotate(-74 12 819)"><rect x="15" y="818" width="4.5" height="2.1" fill="#40a880"/><rect x="19.5" y="818" width="4.5" height="2.1" fill="#60c8a0"/></g><g transform="rotate(-57 12 819)"><rect x="15" y="818" width="4.5" height="2.1" fill="#c050c8"/><rect x="19.5" y="818" width="4.5" height="2.1" fill="#e878e8"/></g><g transform="rotate(-41 12 819)"><rect x="15" y="818" width="4.5" height="2.1" fill="#c09050"/><rect x="19.5" y="818" width="4.5" height="2.1" fill="#d8b080"/></g><g transform="rotate(-25 12 819)"><rect x="15" y="818" width="4.5" height="2.1" fill="#60d040"/><rect x="19.5" y="818" width="4.5" height="2.1" fill="#90f070"/></g><g transform="rotate(-9 12 819)"><rect x="15" y="818" width="4.5" height="2.1" fill="#f8a040"/><rect x="19.5" y="818" width="4.5" height="2.1" fill="#f8f000"/></g><g transform="rotate(8 12 819)"><rect x="15" y="818" width="4.5" height="2.1" fill="#90e060"/><rect x="19.5" y="818" width="4.5" height="2.1" fill="#f8b050"/></g><g transform="rotate(35 12 819)"><rect x="13.2" y="817.6" width="2.6" height="2.9" fill="#1038b0"/><rect x="16" y="817.6" width="2.6" height="2.9" fill="#1a68d8"/><rect x="18.8" y="817.6" width="2.6" height="2.9" fill="#1a88e8"/><rect x="21.6" y="817.6" width="2.6" height="2.9" fill="#20a0ff"/></g></svg>
<div class="a" style="left:397px;top:0px;width:1203px;height:793px;background:#000"></div>
<div class="a" style="left:398px;top:0px;width:1201px;height:792px;background:linear-gradient(#1e1e1e 0,#1e1e1e 28px,#565656 792px)"></div>
<div class="a" style="left:401px;top:27px;width:1195px;height:761px;background:#000"></div>
<div class="a" style="left:402px;top:28px;width:1193px;height:759px;background:#e0e0e0;border-top:1px solid #f2f2f2;border-left:1px solid #f2f2f2"></div>
<div class="a" style="left:397px;top:0px;width:1203px;height:27px;background:linear-gradient(#5e5e5e,#1a1a1a)"></div>
<svg class="a" style="left:408px;top:7px" width="17" height="18" viewBox="0 0 17 18"><path d="M0.5,1 H6 C10,1 14.5,5 15.5,11 V13 H0.5 Z" fill="#3a80f0"/><path d="M7,2.2 C10.5,3 13,6 14,10" stroke="#1a2a40" stroke-width="1" stroke-dasharray="1.2 1" fill="none"/><rect x="0.5" y="13.5" width="15.5" height="4" rx="1" fill="#000"/></svg>
<div class="t" style="left:432px;top:8.61px;font-size:13.25px;font-weight:700;color:#fff;font-family:'Liberation Sans';line-height:normal;">Control de Facturación / Reportes de Liquidaciones / Listado por Liquidación</div>
<svg class="a" style="left:1570px;top:4px" width="26" height="24" viewBox="1570 4 26 24"><path d="M1578,11 L1589.6,22.6 M1589.6,11 L1578,22.6" stroke="#fff" stroke-width="2.4"/></svg>
<div class="a" style="left:402px;top:65px;width:1193px;height:1px;background:#a4a4a4"></div>
<div class="a" style="left:402px;top:66px;width:1193px;height:1px;background:#f4f4f4"></div>
<div class="btn" style="left:407px;top:33px;width:50px;height:31px"></div>

<svg class="a" style="left:407px;top:33px" width="50" height="31" viewBox="407 33 50 31"><circle cx="432" cy="48.8" r="10.7" fill="#c4c4c4"/><path d="M437.6,45.2 L428.6,45.2 L428.6,54.2" stroke="#f4f4f4" stroke-width="3.6" fill="none" stroke-linejoin="miter"/><path d="M430,46.6 L437.6,54.2" stroke="#f4f4f4" stroke-width="4" fill="none"/></svg>
<div class="btn" style="left:462px;top:33px;width:50px;height:31px"></div>
<svg class="a" style="left:462px;top:33px" width="50" height="31" viewBox="462 33 50 31"><circle cx="487" cy="48.8" r="10.7" fill="#c4c4c4"/><path d="M488.4,42.8 L482.4,48.9 L488.4,55" stroke="#f4f4f4" stroke-width="3.6" fill="none" stroke-linejoin="miter"/><path d="M494.2,48.9 H484" stroke="#f4f4f4" stroke-width="4" fill="none"/></svg>
<div class="btn" style="left:517px;top:33px;width:50px;height:31px"></div>
<svg class="a" style="left:517px;top:33px" width="50" height="31" viewBox="517 33 50 31"><circle cx="542" cy="48.8" r="10.7" fill="#c4c4c4"/><path d="M540.6,42.8 L546.6,48.9 L540.6,55" stroke="#f4f4f4" stroke-width="3.6" fill="none" stroke-linejoin="miter"/><path d="M534.8,48.9 H545" stroke="#f4f4f4" stroke-width="4" fill="none"/></svg>
<div class="btn" style="left:572px;top:33px;width:50px;height:31px"></div>
<svg class="a" style="left:572px;top:33px" width="50" height="31" viewBox="572 33 50 31"><circle cx="597" cy="48.8" r="10.7" fill="#c4c4c4"/><path d="M600.1,43.4 L600.1,52.4 L591.1,52.4" stroke="#f4f4f4" stroke-width="3.6" fill="none" stroke-linejoin="miter"/><path d="M598.7,51 L591.1,43.4" stroke="#f4f4f4" stroke-width="4" fill="none"/></svg>
<div class="btn" style="left:627px;top:33px;width:106px;height:31px"></div>
<svg class="a" style="left:640px;top:34px" width="40" height="28" viewBox="640 34 40 28"><path d="M654.5,54.2 H654 C652,54.2 650.9,53 650.9,51 V48 C650.9,46 652,44.5 654,44.5 H655" stroke="#222" stroke-width="3.3" fill="none"/><path d="M653.4,40 L661.2,44.4 L653.4,48.8 Z" fill="#222" stroke="#222" stroke-width="0.6" stroke-linejoin="round"/><path d="M661,44.6 H662 C664,44.6 665.2,46 665.2,48 V51 C665.2,53 664,54.6 662,54.6 H661" stroke="#e8901a" stroke-width="3.3" fill="none"/><path d="M662.5,50.1 L654.8,54.8 L662.5,59.5 Z" fill="#e8901a" stroke="#e8901a" stroke-width="0.6" stroke-linejoin="round"/></svg>
<div class="t" style="left:674px;top:42.44px;font-size:13px;font-weight:400;color:#000;font-family:'Liberation Sans';line-height:normal;">Buscar</div>
<div class="btn" style="left:738px;top:33px;width:106px;height:31px"></div>
<svg class="a" style="left:760px;top:37px" width="24" height="24" viewBox="0 0 24 24"><circle cx="12" cy="12" r="11" fill="#2ea84a"/><path d="M12,5.5 V18.5 M5.5,12 H18.5" stroke="#fff" stroke-width="3.6"/></svg>
<div class="t" style="left:788px;top:42.44px;font-size:13px;font-weight:400;color:#000;font-family:'Liberation Sans';line-height:normal;">Nuevo</div>
<div class="btn" style="left:849px;top:33px;width:106px;height:31px"></div>
<svg class="a" style="left:868px;top:34px" width="30" height="28" viewBox="868 34 30 28"><rect x="875" y="41.5" width="15.7" height="3" rx="1" fill="#e8402e"/><rect x="880.3" y="40" width="5.7" height="2.5" rx="0.8" fill="#e8402e"/><path d="M876,45.2 H889.8 V58.4 Q889.8,59.4 888.8,59.4 H877 Q876,59.4 876,58.4 Z" fill="#e8402e"/><path d="M878.6,47 V57.6 M882.9,47 V57.6 M887.2,47 V57.6" stroke="#f7d0c8" stroke-width="1.1"/></svg>
<div class="t" style="left:899px;top:42.44px;font-size:13px;font-weight:400;color:#000;font-family:'Liberation Sans';line-height:normal;">Borrar</div>
<div class="btn" style="left:960px;top:33px;width:106px;height:31px"></div>
<svg class="a" style="left:978px;top:36px" width="30" height="26" viewBox="978 36 30 26"><path d="M983,41 Q983,40 984,40 H1000 Q1001,40 1001,41 V56.8 Q1001,57.8 1000,57.8 H984 Q983,57.8 983,56.8 Z" fill="#c2c2c2"/><path d="M986,41 H998 V47.8 Q998,48.8 997,48.8 H987 Q986,48.8 986,47.8 Z" fill="#f0f0f0"/><rect x="986" y="40" width="12" height="1.2" fill="#d0d0d0"/><rect x="989" y="52" width="9" height="5.8" fill="#eeeeee"/><rect x="993.4" y="53.2" width="3.3" height="3.5" fill="#c2c2c2"/></svg>
<div class="t" style="left:1008px;top:42.44px;font-size:13px;font-weight:400;color:#999;font-family:'Liberation Sans';line-height:normal;">Grabar</div>
<div class="btn" style="left:1071px;top:33px;width:106px;height:31px"></div>
<svg class="a" style="left:1082px;top:34px" width="30" height="28" viewBox="1082 34 30 28"><path d="M1090.6,42.1 L1102.8,54.9 M1102.8,42.1 L1090.6,54.9" stroke="#c4c4c4" stroke-width="5.6" stroke-linecap="round"/></svg>
<div class="t" style="left:1113px;top:42.44px;font-size:13px;font-weight:400;color:#999;font-family:'Liberation Sans';line-height:normal;">Cancelar</div>
<div class="btn" style="left:1182px;top:33px;width:106px;height:31px"></div>
<svg class="a" style="left:1192px;top:34px" width="30" height="28" viewBox="1192 34 30 28"><path d="M1200.6,44.5 V38.7 H1213.3 L1217.2,42.6 V58 H1200.6 V50.3" fill="none" stroke="#c4c4c4" stroke-width="1.3"/><path d="M1212.9,38.7 V43.2 H1217.2" fill="none" stroke="#c4c4c4" stroke-width="1.2"/><path d="M1198.4,50 C1197.8,47 1198.5,45.8 1201.5,45.8 H1204 C1206.5,45.8 1206.5,49.2 1204,49.2 H1200.6" fill="none" stroke="#c4c4c4" stroke-width="1.3"/></svg>
<div class="t" style="left:1224px;top:42.44px;font-size:13px;font-weight:400;color:#999;font-family:'Liberation Sans';line-height:normal;">Adjuntos</div>
<div class="btn" style="left:1293px;top:33px;width:116px;height:31px"></div>
<svg class="a" style="left:1306px;top:34px" width="30" height="28" viewBox="1306 34 30 28"><path d="M1322,48.8 V37.9 A10.9,10.9 0 0 0 1311.1,48.8 Z" fill="#3a80ea"/><path d="M1322,48.8 H1332.9 A10.9,10.9 0 0 0 1322,37.9 Z" fill="#2ca84c"/><path d="M1322,48.8 H1311.1 A10.9,10.9 0 0 0 1322,59.7 Z" fill="#fbbc10"/><path d="M1322,48.8 V59.7 A10.9,10.9 0 0 0 1332.9,48.8 Z" fill="#ea4335"/><path d="M1317.5,44.5 C1316,47 1316.5,50 1319,52.5" stroke="#2a2a2a" stroke-width="1.6" fill="none"/><path d="M1315.2,53.5 H1321.5 V47.5 Z" fill="#2a2a2a"/><path d="M1323,44 H1328.5 L1323,49.5 Z" fill="#2a2a2a"/><path d="M1325.5,45.5 C1328,48 1328,51 1326.5,53" stroke="#2a2a2a" stroke-width="1.6" fill="none"/></svg>
<div class="t" style="left:1338px;top:42.44px;font-size:13px;font-weight:400;color:#000;font-family:'Liberation Sans';line-height:normal;">Refrescar</div>
<div class="a" style="left:1567px;top:33px;width:23px;height:25px;background:linear-gradient(#e8e8e8,#dedede)"></div>
<div class="t" style="left:1574px;top:36.93px;font-size:14px;font-weight:400;color:#000;font-family:'Liberation Sans';line-height:normal;">&gt;</div>
<div class="a" style="left:410px;top:73px;width:160px;height:23px;border-radius:5px 5px 0 0;background:linear-gradient(#5a5a5a,#262626)"></div>
<div class="t" style="left:418px;top:76.71px;font-size:13.25px;font-weight:700;color:#fff;font-family:'Liberation Sans';line-height:normal;">Listado de Liquidación</div>
<div class="a" style="left:404px;top:95px;width:1190px;height:5px;background:#222"></div>
<div class="t" style="left:410px;top:108.23px;font-size:13px;font-weight:400;color:#e8000a;font-family:'Liberation Sans';line-height:normal;">Liquidación</div>
<div class="a" style="left:704px;top:105px;width:274px;height:20px;background:#fff;border:1px solid #8c8c8c"></div>
<div class="t" style="left:706px;top:108.23px;font-size:13px;font-weight:400;color:#000;font-family:'Liberation Sans';line-height:normal;">65835</div>
<div class="sbtn" style="left:979px;top:105px;width:19px;height:19px"></div>
<svg class="a" style="left:979px;top:105px" width="19" height="19" viewBox="0 0 19 19"><circle cx="7.5" cy="7.5" r="4.6" fill="#fff" stroke="#333" stroke-width="1.4"/><path d="M11,11 L16,16" stroke="#222" stroke-width="2.6" stroke-linecap="round"/></svg>
<div class="t" style="left:1002px;top:108.23px;font-size:13px;font-weight:400;color:#e8000a;font-family:'Liberation Sans';line-height:normal;">Solo Debitos</div>
<div class="a" style="left:1296px;top:107px;width:16px;height:16px;background:linear-gradient(#fdfdfd,#eaeaea);border:1px solid #9a9a9a"></div>
<div class="a" style="left:402px;top:132px;width:1193px;height:1px;background:#a0a0a0"></div>
<div class="a" style="left:402px;top:133px;width:1193px;height:1px;background:#f4f4f4"></div>
<div class="btn" style="left:855px;top:138px;width:141px;height:29px"></div>
<svg class="a" style="left:858px;top:138px" width="32" height="30" viewBox="858 138 32 30"><rect x="868.9" y="142.9" width="10.3" height="8.8" fill="#fff" stroke="#f8d000" stroke-width="1.7"/><path d="M871.2,146.2 H876.8 M871.2,148.8 H876.8" stroke="#f8e070" stroke-width="1.1"/><rect x="863.8" y="151.1" width="20.6" height="10.6" rx="3.2" fill="#222"/><rect x="866.5" y="157.3" width="15" height="3.3" rx="1" fill="#fff"/><ellipse cx="867.8" cy="153.8" rx="1.3" ry="0.7" fill="#fff"/></svg>
<div class="t" style="left:890px;top:146.24px;font-size:13px;font-weight:400;color:#000;font-family:'Liberation Sans';line-height:normal;">Ejecutar Reporte</div>
<div class="btn" style="left:1000px;top:138px;width:142px;height:29px"></div>
<svg class="a" style="left:1004px;top:138px" width="32" height="30" viewBox="1004 138 32 30"><path d="M1013,141.6 H1031.2 V164.1 H1008.9 V145.7 Q1008.9,141.6 1013,141.6 Z" fill="#9dc156"/><text x="1020.2" y="160" font-family="Liberation Serif" font-weight="700" font-size="19" fill="#f4f4f4" text-anchor="middle">X</text></svg>
<div class="t" style="left:1036px;top:146.24px;font-size:13px;font-weight:400;color:#000;font-family:'Liberation Sans';line-height:normal;">Exportar Reporte</div>
<div class="a" style="left:402px;top:173px;width:1193px;height:7px;background:linear-gradient(#e6e6e6,#d4d4d4)"></div>
<div class="a" style="left:973px;top:176px;width:2px;height:2px;background:#aaaaaa"></div>
<div class="a" style="left:980px;top:176px;width:2px;height:2px;background:#aaaaaa"></div>
<div class="a" style="left:987px;top:176px;width:2px;height:2px;background:#aaaaaa"></div>
<div class="a" style="left:994px;top:176px;width:2px;height:2px;background:#aaaaaa"></div>
<div class="a" style="left:1001px;top:176px;width:2px;height:2px;background:#aaaaaa"></div>
<div class="a" style="left:1008px;top:176px;width:2px;height:2px;background:#aaaaaa"></div>
<div class="a" style="left:1015px;top:176px;width:2px;height:2px;background:#aaaaaa"></div>
<div class="a" style="left:1022px;top:176px;width:2px;height:2px;background:#aaaaaa"></div>
<div class="sbtn" style="left:402px;top:182px;width:22px;height:22px;border-radius:4px"></div>
<div class="sbtn" style="left:425px;top:182px;width:22px;height:22px;border-radius:4px"></div>
<div class="sbtn" style="left:448px;top:182px;width:22px;height:22px;border-radius:4px"></div>
<svg class="a" style="left:402px;top:180px" width="70" height="26" viewBox="402 180 70 26"><rect x="406.3" y="186" width="13.6" height="13.9" rx="0.6" fill="#111"/><rect x="407.4" y="187" width="1" height="12" fill="#999"/><rect x="417.8" y="189" width="1" height="10" fill="#999"/><rect x="409" y="187" width="7.8" height="6.2" fill="#f2f2f2"/><rect x="409" y="192.6" width="7.8" height="0.8" fill="#888"/><rect x="415" y="195.6" width="1.9" height="3" fill="#f0f0f0"/><circle cx="418.3" cy="187.6" r="0.7" fill="#fff"/><path d="M432.8,186.3 H441.5 L439,191.8 H430.2 Z" fill="#fff" stroke="#111" stroke-width="1"/><path d="M433.5,188.3 H438.8 M432.8,190.2 H438" stroke="#111" stroke-width="1"/><path d="M441.5,186.3 V191" stroke="#111" stroke-width="0.9" stroke-dasharray="0.9 0.9"/><path d="M429.5,192 H442.5 Q444,192 444,194 V198.5 Q444,200 442.5,200 H430.5 Q428.2,200 428.2,198 V194 Q428.2,192 429.5,192 Z" fill="#111"/><rect x="429.2" y="194.2" width="13.5" height="2.3" fill="#f4f4f4"/><rect x="435" y="195.4" width="3" height="1.1" fill="#e8e000"/><rect x="430" y="198" width="11.5" height="0.8" fill="#666"/><circle cx="442.6" cy="193" r="1.6" fill="#eee" stroke="#111" stroke-width="0.8" stroke-dasharray="0.8 0.6"/><path d="M455.6,189 A5.7,5.7 0 1 0 461.8,188.4" stroke="#c2c2c2" stroke-width="1.7" fill="none" stroke-dasharray="1.4 0.4"/><path d="M460.2,186.6 L464.6,187 L461.5,190.4 Z" fill="#c2c2c2"/></svg>
<div class="sbtn" style="left:481px;top:182px;width:22px;height:22px;border-radius:4px"></div>
<svg class="a" style="left:481px;top:182px" width="22" height="22" viewBox="0 0 22 22"><rect x="6" y="6" width="2" height="9" fill="#c0c0c0"/><path d="M16,6 L9.5,10.5 L16,15 Z" fill="#c0c0c0"/></svg>
<div class="sbtn" style="left:505px;top:182px;width:22px;height:22px;border-radius:4px"></div>
<svg class="a" style="left:505px;top:182px" width="22" height="22" viewBox="0 0 22 22"><path d="M14,6 L7.5,10.5 L14,15 Z" fill="#c0c0c0"/></svg>
<div class="sbtn" style="left:528px;top:182px;width:22px;height:22px;border-radius:4px"></div>
<svg class="a" style="left:528px;top:182px" width="22" height="22" viewBox="0 0 22 22"><path d="M8,6 L14.5,10.5 L8,15 Z" fill="#111"/></svg>
<div class="sbtn" style="left:551px;top:182px;width:22px;height:22px;border-radius:4px"></div>
<svg class="a" style="left:551px;top:182px" width="22" height="22" viewBox="0 0 22 22"><path d="M6,6 L12.5,10.5 L6,15 Z" fill="#111"/><rect x="13" y="6" width="2.2" height="9" fill="#111"/></svg>
<div class="a" style="left:573px;top:182px;width:40px;height:23px;background:#fff;border:1px solid #8c8c8c"></div>
<div class="t" style="left:575px;top:186.24px;font-size:13px;font-weight:400;color:#000;font-family:'Liberation Sans';line-height:normal;">1</div>
<div class="sbtn" style="left:623px;top:182px;width:23px;height:22px;border-radius:4px"></div>
<svg class="a" style="left:623px;top:182px" width="23" height="22" viewBox="0 0 23 22"><path d="M6,4 H13 L16,7 V18 H6 Z" fill="#fff" stroke="#111" stroke-width="1.2"/><path d="M13,4 V7 H16" fill="none" stroke="#111" stroke-width="0.9"/></svg>
<div class="sbtn" style="left:647px;top:182px;width:22px;height:22px;border-radius:4px"></div>
<svg class="a" style="left:647px;top:182px" width="22" height="22" viewBox="0 0 22 22"><path d="M7,6 H13 L15,8 V16 H7 Z" fill="#fff" stroke="#111" stroke-width="1.1"/><path d="M3,3.5 H19 M3,18.5 H19" stroke="#111" stroke-width="1.1"/></svg>
<div class="sbtn" style="left:670px;top:182px;width:22px;height:22px;border-radius:4px"></div>
<svg class="a" style="left:670px;top:182px" width="22" height="22" viewBox="0 0 22 22"><path d="M3,18 V3.5 H16 L19,6.5 V18" fill="none" stroke="#111" stroke-width="1.1"/><path d="M5,18 V5.5 H15 L17,7.5 V18" fill="none" stroke="#111" stroke-width="1.1"/></svg>
<div class="sbtn" style="left:702px;top:182px;width:22px;height:22px;border-radius:4px"></div>
<svg class="a" style="left:702px;top:182px" width="22" height="22" viewBox="0 0 22 22"><circle cx="9" cy="9" r="5" fill="#fff" stroke="#111" stroke-width="1.5"/><path d="M9,6 V12 M6,9 H12" stroke="#111" stroke-width="1.8"/><path d="M12.5,12.5 L18,18" stroke="#111" stroke-width="2.2"/></svg>
<div class="sbtn" style="left:726px;top:182px;width:22px;height:22px;border-radius:4px"></div>
<svg class="a" style="left:726px;top:182px" width="22" height="22" viewBox="0 0 22 22"><circle cx="9" cy="9" r="5" fill="#fff" stroke="#111" stroke-width="1.5"/><path d="M6,9 H12" stroke="#111" stroke-width="1.8"/><path d="M12.5,12.5 L18,18" stroke="#111" stroke-width="2.2"/></svg>
<div class="a" style="left:748px;top:182px;width:81px;height:23px;background:#fff;border:1px solid #8c8c8c"></div>
<div class="a" style="left:806px;top:183px;width:22px;height:21px;background:linear-gradient(#f6f6f6,#e4e4e4);border-left:1px solid #a8a8a8"></div>
<svg class="a" style="left:806px;top:183px" width="22" height="21" viewBox="0 0 22 21"><path d="M6,8 H16 L11,13 Z" fill="#222"/></svg>
<div class="t" style="left:750px;top:186.24px;font-size:13px;font-weight:400;color:#000;font-family:'Liberation Sans';line-height:normal;">100%</div>
<div class="a" style="left:402px;top:207px;width:1193px;height:1px;background:#a8a8a8"></div>
<div class="a" style="left:402px;top:208px;width:1193px;height:547px;background:#e0e0e0"></div>
<div class="a" style="left:425px;top:209px;width:1px;height:546px;background:#111"></div>
<div class="a" style="left:426px;top:209px;width:1123px;height:546px;background:#fff"></div>
<div class="a" style="left:1549px;top:209px;width:1px;height:546px;background:#111"></div>
<div class="a" style="left:1550px;top:209px;width:5px;height:546px;background:#858585"></div>
<div class="a" style="left:426px;top:209px;width:1123px;height:546px;overflow:hidden">
<div class="t" style="left:451.00px;top:4.50px;font-size:19px;font-weight:400;font-family:'Liberation Sans';letter-spacing:0.84px;font-style:normal;color:#000;line-height:normal">DETALLE DE LIQUIDACIÓN</div>
<div class="t" style="left:47.50px;top:35.44px;font-size:13px;font-weight:700;font-family:'Liberation Sans';letter-spacing:0.35px;font-style:normal;color:#000;line-height:normal">N° de Liquidación:</div>
<div class="t" style="left:207.00px;top:35.44px;font-size:13px;font-weight:400;font-family:'Liberation Sans';letter-spacing:0px;font-style:normal;color:#000;line-height:normal">65835</div>
<div class="t" style="left:333.70px;top:33.33px;font-size:13px;font-weight:700;font-family:'Liberation Sans';letter-spacing:0.37px;font-style:normal;color:#000;line-height:normal">Fecha de Liquidación:</div>
<div class="t" style="left:493.50px;top:33.33px;font-size:13px;font-weight:400;font-family:'Liberation Sans';letter-spacing:0px;font-style:normal;color:#000;line-height:normal">2017-08-01</div>
<div class="t" style="left:642.00px;top:32.44px;font-size:13px;font-weight:700;font-family:'Liberation Sans';letter-spacing:0.39px;font-style:normal;color:#000;line-height:normal">Tipo de Prestador:</div>
<div class="t" style="left:775.40px;top:32.44px;font-size:13px;font-weight:400;font-family:'Liberation Sans';letter-spacing:0.14px;font-style:normal;color:#000;line-height:normal">CENTROS MEDICOS</div>
<div class="t" style="left:47.50px;top:55.13px;font-size:13px;font-weight:700;font-family:'Liberation Sans';letter-spacing:0.35px;font-style:normal;color:#000;line-height:normal">Prestador:</div>
<div class="t" style="left:207.00px;top:55.13px;font-size:13px;font-weight:400;font-family:'Liberation Sans';letter-spacing:0px;font-style:normal;color:#000;line-height:normal">DIAGMED SA</div>
<div class="t" style="left:47.50px;top:72.94px;font-size:13px;font-weight:700;font-family:'Liberation Sans';letter-spacing:0.35px;font-style:normal;color:#000;line-height:normal">N° de Factura:</div>
<div class="t" style="left:205.70px;top:72.94px;font-size:13px;font-weight:400;font-family:'Liberation Sans';letter-spacing:0px;font-style:normal;color:#000;line-height:normal">1187</div>
<div class="t" style="left:642.00px;top:73.24px;font-size:13px;font-weight:700;font-family:'Liberation Sans';letter-spacing:0.23px;font-style:normal;color:#000;line-height:normal">Estado Liquidacion:</div>
<div class="t" style="left:775.40px;top:73.24px;font-size:13px;font-weight:400;font-family:'Liberation Sans';letter-spacing:0px;font-style:normal;color:#000;line-height:normal">Ingresada</div>
<div class="a" style="left:46px;top:116px;width:1013px;height:45px;background:#cbcbcb;border:2px solid #111"></div>
<div class="t" style="left:-9.50px;width:200px;text-align:center;top:125.42px;font-size:13px;font-weight:700;font-family:'Liberation Serif';letter-spacing:0.45px;color:#000;line-height:normal">Apellido y</div>
<div class="t" style="left:-9.50px;width:200px;text-align:center;top:140.02px;font-size:13px;font-weight:700;font-family:'Liberation Serif';letter-spacing:0.45px;color:#000;line-height:normal">nombre</div>
<div class="t" style="left:180.00px;top:125.42px;font-size:13px;font-weight:700;font-family:'Liberation Serif';letter-spacing:0.45px;font-style:normal;color:#000;line-height:normal">N&nbsp; de</div>
<div class="t" style="left:181.00px;top:140.02px;font-size:13px;font-weight:700;font-family:'Liberation Serif';letter-spacing:0.45px;font-style:normal;color:#000;line-height:normal">Afiliado</div>
<div class="t" style="left:222.00px;width:200px;text-align:center;top:125.42px;font-size:13px;font-weight:700;font-family:'Liberation Serif';letter-spacing:0.45px;color:#000;line-height:normal">Fecha de</div>
<div class="t" style="left:222.00px;width:200px;text-align:center;top:140.02px;font-size:13px;font-weight:700;font-family:'Liberation Serif';letter-spacing:0.45px;color:#000;line-height:normal">Realización</div>
<div class="t" style="left:296.50px;width:200px;text-align:center;top:125.42px;font-size:13px;font-weight:700;font-family:'Liberation Serif';letter-spacing:0.45px;color:#000;line-height:normal">Código de</div>
<div class="t" style="left:296.50px;width:200px;text-align:center;top:140.02px;font-size:13px;font-weight:700;font-family:'Liberation Serif';letter-spacing:0.45px;color:#000;line-height:normal">Prestación</div>
<div class="t" style="left:369.50px;width:200px;text-align:center;top:125.42px;font-size:13px;font-weight:700;font-family:'Liberation Serif';letter-spacing:0.45px;color:#000;line-height:normal">Nombre de</div>
<div class="t" style="left:369.50px;width:200px;text-align:center;top:140.02px;font-size:13px;font-weight:700;font-family:'Liberation Serif';letter-spacing:0.45px;color:#000;line-height:normal">Prestación</div>
<div class="t" style="left:466.00px;width:200px;text-align:center;top:132.72px;font-size:13px;font-weight:700;font-family:'Liberation Serif';letter-spacing:0.45px;color:#000;line-height:normal">Cantidad</div>
<div class="t" style="left:532.50px;width:200px;text-align:center;top:125.42px;font-size:13px;font-weight:700;font-family:'Liberation Serif';letter-spacing:0.45px;color:#000;line-height:normal">Importe</div>
<div class="t" style="left:532.50px;width:200px;text-align:center;top:140.02px;font-size:13px;font-weight:700;font-family:'Liberation Serif';letter-spacing:0.45px;color:#000;line-height:normal">Facturado</div>
<div class="t" style="left:608.50px;width:200px;text-align:center;top:125.42px;font-size:13px;font-weight:700;font-family:'Liberation Serif';letter-spacing:0.45px;color:#000;line-height:normal">Importe</div>
<div class="t" style="left:608.50px;width:200px;text-align:center;top:140.02px;font-size:13px;font-weight:700;font-family:'Liberation Serif';letter-spacing:0.45px;color:#000;line-height:normal">Debitado</div>
<div class="t" style="left:690.00px;width:200px;text-align:center;top:125.42px;font-size:13px;font-weight:700;font-family:'Liberation Serif';letter-spacing:0.45px;color:#000;line-height:normal">Motivo</div>
<div class="t" style="left:690.00px;width:200px;text-align:center;top:140.02px;font-size:13px;font-weight:700;font-family:'Liberation Serif';letter-spacing:0.45px;color:#000;line-height:normal">Debito</div>
<div class="t" style="left:786.00px;width:200px;text-align:center;top:125.42px;font-size:13px;font-weight:700;font-family:'Liberation Serif';letter-spacing:0.45px;color:#000;line-height:normal">Motivo</div>
<div class="t" style="left:786.00px;width:200px;text-align:center;top:140.02px;font-size:13px;font-weight:700;font-family:'Liberation Serif';letter-spacing:0.45px;color:#000;line-height:normal">Debito</div>
<div class="t" style="left:893.00px;width:200px;text-align:center;top:124.92px;font-size:13px;font-weight:700;font-family:'Liberation Serif';letter-spacing:0.45px;color:#000;line-height:normal">Importe</div>
<div class="t" style="left:893.00px;width:200px;text-align:center;top:139.42px;font-size:13px;font-weight:700;font-family:'Liberation Serif';letter-spacing:0.45px;color:#000;line-height:normal">Reconocido</div>
<div class="t" style="left:53.40px;top:175.00px;font-size:10.5px;font-weight:400;font-family:'Liberation Sans';letter-spacing:0.12px;font-style:normal;color:#000;line-height:normal">BRAVO RUBEN OMAR</div>
<div class="t" style="left:181.50px;top:175.00px;font-size:10.5px;font-weight:400;font-family:'Liberation Sans';letter-spacing:0.12px;font-style:normal;color:#000;line-height:normal">11155-1</div>
<div class="t" style="left:295.00px;top:175.00px;font-size:10.5px;font-weight:400;font-family:'Liberation Sans';letter-spacing:0.12px;font-style:normal;color:#000;line-height:normal">2017-08-25</div>
<div class="t" style="left:368.40px;top:175.00px;font-size:10.5px;font-weight:400;font-family:'Liberation Sans';letter-spacing:0.12px;font-style:normal;color:#000;line-height:normal">B-342002</div>
<div class="t" style="left:437.20px;top:175.00px;font-size:10.5px;font-weight:400;font-family:'Liberation Sans';letter-spacing:0.12px;font-style:normal;color:#000;line-height:normal">RMN CEREBRAL CON</div>
<div class="t" style="left:465.80px;width:200px;text-align:center;top:175.00px;font-size:10.5px;font-weight:400;font-family:'Liberation Sans';letter-spacing:0.12px;color:#000;line-height:normal">1</div>
<div class="t" style="left:532.00px;width:200px;text-align:center;top:175.00px;font-size:10.5px;font-weight:400;font-family:'Liberation Sans';letter-spacing:0.12px;color:#000;line-height:normal">390,00</div>
<div class="t" style="left:608.50px;width:200px;text-align:center;top:175.00px;font-size:10.5px;font-weight:400;font-family:'Liberation Sans';letter-spacing:0.12px;color:#000;line-height:normal">0,00</div>
<div class="t" style="left:891.00px;width:200px;text-align:center;top:175.00px;font-size:10.5px;font-weight:400;font-family:'Liberation Sans';letter-spacing:0.12px;color:#000;line-height:normal">390,00</div>
<div class="t" style="left:53.40px;top:191.80px;font-size:10.5px;font-weight:400;font-family:'Liberation Sans';letter-spacing:0.12px;font-style:normal;color:#000;line-height:normal">Nota:</div>
<div class="t" style="left:91.70px;top:191.80px;font-size:10.5px;font-weight:400;font-family:'Liberation Sans';letter-spacing:0.12px;font-style:italic;color:#000;line-height:normal">GADOLINEO</div>
<div class="a" style="left:53px;top:214px;width:990px;height:1px;background:#4a4a4a"></div>
<div class="t" style="left:53.40px;top:225.00px;font-size:10.5px;font-weight:400;font-family:'Liberation Sans';letter-spacing:0.12px;font-style:normal;color:#000;line-height:normal">BRAVO RUBEN OMAR</div>
<div class="t" style="left:181.50px;top:225.00px;font-size:10.5px;font-weight:400;font-family:'Liberation Sans';letter-spacing:0.12px;font-style:normal;color:#000;line-height:normal">11155-1</div>
<div class="t" style="left:295.00px;top:225.00px;font-size:10.5px;font-weight:400;font-family:'Liberation Sans';letter-spacing:0.12px;font-style:normal;color:#000;line-height:normal">2017-08-25</div>
<div class="t" style="left:368.40px;top:225.00px;font-size:10.5px;font-weight:400;font-family:'Liberation Sans';letter-spacing:0.12px;font-style:normal;color:#000;line-height:normal">B-5509401</div>
<div class="t" style="left:437.20px;top:225.00px;font-size:10.5px;font-weight:400;font-family:'Liberation Sans';letter-spacing:0.12px;font-style:normal;color:#000;line-height:normal">RESONANCIA</div>
<div class="t" style="left:465.80px;width:200px;text-align:center;top:225.00px;font-size:10.5px;font-weight:400;font-family:'Liberation Sans';letter-spacing:0.12px;color:#000;line-height:normal">1</div>
<div class="t" style="left:532.00px;width:200px;text-align:center;top:225.00px;font-size:10.5px;font-weight:400;font-family:'Liberation Sans';letter-spacing:0.12px;color:#000;line-height:normal">4.298,00</div>
<div class="t" style="left:608.50px;width:200px;text-align:center;top:225.00px;font-size:10.5px;font-weight:400;font-family:'Liberation Sans';letter-spacing:0.12px;color:#000;line-height:normal">146,00</div>
<div class="t" style="left:692.00px;width:200px;text-align:center;top:225.00px;font-size:10.5px;font-weight:400;font-family:'Liberation Sans';letter-spacing:0.12px;color:#000;line-height:normal">D26</div>
<div class="t" style="left:891.00px;width:200px;text-align:center;top:225.00px;font-size:10.5px;font-weight:400;font-family:'Liberation Sans';letter-spacing:0.12px;color:#000;line-height:normal">4.152,00</div>
<div class="t" style="left:53.40px;top:241.80px;font-size:10.5px;font-weight:400;font-family:'Liberation Sans';letter-spacing:0.12px;font-style:normal;color:#000;line-height:normal">Nota:</div>
<div class="a" style="left:53px;top:264px;width:990px;height:1px;background:#4a4a4a"></div>
<div class="t" style="left:53.40px;top:274.50px;font-size:10.5px;font-weight:400;font-family:'Liberation Sans';letter-spacing:0.12px;font-style:normal;color:#000;line-height:normal">CAMBARERI MARIA SOL</div>
<div class="t" style="left:181.50px;top:274.50px;font-size:10.5px;font-weight:400;font-family:'Liberation Sans';letter-spacing:0.12px;font-style:normal;color:#000;line-height:normal">23893-20</div>
<div class="t" style="left:295.00px;top:274.50px;font-size:10.5px;font-weight:400;font-family:'Liberation Sans';letter-spacing:0.12px;font-style:normal;color:#000;line-height:normal">2017-10-12</div>
<div class="t" style="left:368.40px;top:274.50px;font-size:10.5px;font-weight:400;font-family:'Liberation Sans';letter-spacing:0.12px;font-style:normal;color:#000;line-height:normal">B-180112</div>
<div class="t" style="left:437.20px;top:274.50px;font-size:10.5px;font-weight:400;font-family:'Liberation Sans';letter-spacing:0.12px;font-style:normal;color:#000;line-height:normal">ECOGRAFIA DE</div>
<div class="t" style="left:465.80px;width:200px;text-align:center;top:274.50px;font-size:10.5px;font-weight:400;font-family:'Liberation Sans';letter-spacing:0.12px;color:#000;line-height:normal">1</div>
<div class="t" style="left:532.00px;width:200px;text-align:center;top:274.50px;font-size:10.5px;font-weight:400;font-family:'Liberation Sans';letter-spacing:0.12px;color:#000;line-height:normal">898,86</div>
<div class="t" style="left:608.50px;width:200px;text-align:center;top:274.50px;font-size:10.5px;font-weight:400;font-family:'Liberation Sans';letter-spacing:0.12px;color:#000;line-height:normal">0,00</div>
<div class="t" style="left:891.00px;width:200px;text-align:center;top:274.50px;font-size:10.5px;font-weight:400;font-family:'Liberation Sans';letter-spacing:0.12px;color:#000;line-height:normal">898,86</div>
<div class="t" style="left:53.40px;top:291.30px;font-size:10.5px;font-weight:400;font-family:'Liberation Sans';letter-spacing:0.12px;font-style:normal;color:#000;line-height:normal">Nota:</div>
<div class="a" style="left:53px;top:313px;width:990px;height:1px;background:#4a4a4a"></div>
<div class="t" style="left:53.40px;top:324.00px;font-size:10.5px;font-weight:400;font-family:'Liberation Sans';letter-spacing:0.12px;font-style:normal;color:#000;line-height:normal">ALESSANDRO MARTIN</div>
<div class="t" style="left:181.50px;top:324.00px;font-size:10.5px;font-weight:400;font-family:'Liberation Sans';letter-spacing:0.12px;font-style:normal;color:#000;line-height:normal">39426-1</div>
<div class="t" style="left:295.00px;top:324.00px;font-size:10.5px;font-weight:400;font-family:'Liberation Sans';letter-spacing:0.12px;font-style:normal;color:#000;line-height:normal">2017-08-07</div>
<div class="t" style="left:368.40px;top:324.00px;font-size:10.5px;font-weight:400;font-family:'Liberation Sans';letter-spacing:0.12px;font-style:normal;color:#000;line-height:normal">B-340213</div>
<div class="t" style="left:437.20px;top:324.00px;font-size:10.5px;font-weight:400;font-family:'Liberation Sans';letter-spacing:0.12px;font-style:normal;color:#000;line-height:normal">RADIOGRAFIA DE</div>
<div class="t" style="left:465.80px;width:200px;text-align:center;top:324.00px;font-size:10.5px;font-weight:400;font-family:'Liberation Sans';letter-spacing:0.12px;color:#000;line-height:normal">2</div>
<div class="t" style="left:532.00px;width:200px;text-align:center;top:324.00px;font-size:10.5px;font-weight:400;font-family:'Liberation Sans';letter-spacing:0.12px;color:#000;line-height:normal">759,60</div>
<div class="t" style="left:608.50px;width:200px;text-align:center;top:324.00px;font-size:10.5px;font-weight:400;font-family:'Liberation Sans';letter-spacing:0.12px;color:#000;line-height:normal">0,00</div>
<div class="t" style="left:891.00px;width:200px;text-align:center;top:324.00px;font-size:10.5px;font-weight:400;font-family:'Liberation Sans';letter-spacing:0.12px;color:#000;line-height:normal">759,60</div>
<div class="t" style="left:53.40px;top:340.80px;font-size:10.5px;font-weight:400;font-family:'Liberation Sans';letter-spacing:0.12px;font-style:normal;color:#000;line-height:normal">Nota:</div>
<div class="a" style="left:53px;top:362px;width:990px;height:1px;background:#4a4a4a"></div>
<div class="t" style="left:53.40px;top:373.30px;font-size:10.5px;font-weight:400;font-family:'Liberation Sans';letter-spacing:0.12px;font-style:normal;color:#000;line-height:normal">GUILLEN AMPARO</div>
<div class="t" style="left:181.50px;top:373.30px;font-size:10.5px;font-weight:400;font-family:'Liberation Sans';letter-spacing:0.12px;font-style:normal;color:#000;line-height:normal">42050-20</div>
<div class="t" style="left:295.00px;top:373.30px;font-size:10.5px;font-weight:400;font-family:'Liberation Sans';letter-spacing:0.12px;font-style:normal;color:#000;line-height:normal">2017-08-22</div>
<div class="t" style="left:368.40px;top:373.30px;font-size:10.5px;font-weight:400;font-family:'Liberation Sans';letter-spacing:0.12px;font-style:normal;color:#000;line-height:normal">B-5509401</div>
<div class="t" style="left:437.20px;top:373.30px;font-size:10.5px;font-weight:400;font-family:'Liberation Sans';letter-spacing:0.12px;font-style:normal;color:#000;line-height:normal">RESONANCIA</div>
<div class="t" style="left:465.80px;width:200px;text-align:center;top:373.30px;font-size:10.5px;font-weight:400;font-family:'Liberation Sans';letter-spacing:0.12px;color:#000;line-height:normal">1</div>
<div class="t" style="left:532.00px;width:200px;text-align:center;top:373.30px;font-size:10.5px;font-weight:400;font-family:'Liberation Sans';letter-spacing:0.12px;color:#000;line-height:normal">4.298,00</div>
<div class="t" style="left:608.50px;width:200px;text-align:center;top:373.30px;font-size:10.5px;font-weight:400;font-family:'Liberation Sans';letter-spacing:0.12px;color:#000;line-height:normal">146,00</div>
<div class="t" style="left:692.00px;width:200px;text-align:center;top:373.30px;font-size:10.5px;font-weight:400;font-family:'Liberation Sans';letter-spacing:0.12px;color:#000;line-height:normal">D26</div>
<div class="t" style="left:891.00px;width:200px;text-align:center;top:373.30px;font-size:10.5px;font-weight:400;font-family:'Liberation Sans';letter-spacing:0.12px;color:#000;line-height:normal">4.152,00</div>
<div class="t" style="left:53.40px;top:390.10px;font-size:10.5px;font-weight:400;font-family:'Liberation Sans';letter-spacing:0.12px;font-style:normal;color:#000;line-height:normal">Nota:</div>
<div class="a" style="left:53px;top:412px;width:990px;height:1px;background:#4a4a4a"></div>
<div class="t" style="left:53.40px;top:422.50px;font-size:10.5px;font-weight:400;font-family:'Liberation Sans';letter-spacing:0.12px;font-style:normal;color:#000;line-height:normal">PARMIGIANI VERONICA</div>
<div class="t" style="left:181.50px;top:422.50px;font-size:10.5px;font-weight:400;font-family:'Liberation Sans';letter-spacing:0.12px;font-style:normal;color:#000;line-height:normal">44690-1</div>
<div class="t" style="left:295.00px;top:422.50px;font-size:10.5px;font-weight:400;font-family:'Liberation Sans';letter-spacing:0.12px;font-style:normal;color:#000;line-height:normal">2017-08-28</div>
<div class="t" style="left:368.40px;top:422.50px;font-size:10.5px;font-weight:400;font-family:'Liberation Sans';letter-spacing:0.12px;font-style:normal;color:#000;line-height:normal">B-340602</div>
<div class="t" style="left:437.20px;top:422.50px;font-size:10.5px;font-weight:400;font-family:'Liberation Sans';letter-spacing:0.12px;font-style:normal;color:#000;line-height:normal">MAMOGRAFIA,</div>
<div class="t" style="left:465.80px;width:200px;text-align:center;top:422.50px;font-size:10.5px;font-weight:400;font-family:'Liberation Sans';letter-spacing:0.12px;color:#000;line-height:normal">2</div>
<div class="t" style="left:532.00px;width:200px;text-align:center;top:422.50px;font-size:10.5px;font-weight:400;font-family:'Liberation Sans';letter-spacing:0.12px;color:#000;line-height:normal">1.012,80</div>
<div class="t" style="left:608.50px;width:200px;text-align:center;top:422.50px;font-size:10.5px;font-weight:400;font-family:'Liberation Sans';letter-spacing:0.12px;color:#000;line-height:normal">0,00</div>
<div class="t" style="left:891.00px;width:200px;text-align:center;top:422.50px;font-size:10.5px;font-weight:400;font-family:'Liberation Sans';letter-spacing:0.12px;color:#000;line-height:normal">1.012,80</div>
<div class="t" style="left:53.40px;top:439.30px;font-size:10.5px;font-weight:400;font-family:'Liberation Sans';letter-spacing:0.12px;font-style:normal;color:#000;line-height:normal">Nota:</div>
<div class="a" style="left:53px;top:461px;width:990px;height:1px;background:#4a4a4a"></div>
<div class="t" style="left:53.40px;top:471.50px;font-size:10.5px;font-weight:400;font-family:'Liberation Sans';letter-spacing:0.12px;font-style:normal;color:#000;line-height:normal">PARMIGIANI VERONICA</div>
<div class="t" style="left:181.50px;top:471.50px;font-size:10.5px;font-weight:400;font-family:'Liberation Sans';letter-spacing:0.12px;font-style:normal;color:#000;line-height:normal">44690-1</div>
<div class="t" style="left:295.00px;top:471.50px;font-size:10.5px;font-weight:400;font-family:'Liberation Sans';letter-spacing:0.12px;font-style:normal;color:#000;line-height:normal">2017-08-28</div>
<div class="t" style="left:368.40px;top:471.50px;font-size:10.5px;font-weight:400;font-family:'Liberation Sans';letter-spacing:0.12px;font-style:normal;color:#000;line-height:normal">B-340601</div>
<div class="t" style="left:437.20px;top:471.50px;font-size:10.5px;font-weight:400;font-family:'Liberation Sans';letter-spacing:0.12px;font-style:normal;color:#000;line-height:normal">MAMOGRAFIA</div>
<div class="t" style="left:465.80px;width:200px;text-align:center;top:471.50px;font-size:10.5px;font-weight:400;font-family:'Liberation Sans';letter-spacing:0.12px;color:#000;line-height:normal">2</div>
<div class="t" style="left:532.00px;width:200px;text-align:center;top:471.50px;font-size:10.5px;font-weight:400;font-family:'Liberation Sans';letter-spacing:0.12px;color:#000;line-height:normal">1.519,20</div>
<div class="t" style="left:608.50px;width:200px;text-align:center;top:471.50px;font-size:10.5px;font-weight:400;font-family:'Liberation Sans';letter-spacing:0.12px;color:#000;line-height:normal">0,00</div>
<div class="t" style="left:891.00px;width:200px;text-align:center;top:471.50px;font-size:10.5px;font-weight:400;font-family:'Liberation Sans';letter-spacing:0.12px;color:#000;line-height:normal">1.519,20</div>
<div class="t" style="left:53.40px;top:488.30px;font-size:10.5px;font-weight:400;font-family:'Liberation Sans';letter-spacing:0.12px;font-style:normal;color:#000;line-height:normal">Nota:</div>
<div class="a" style="left:53px;top:510px;width:990px;height:1px;background:#4a4a4a"></div>
<div class="t" style="left:53.40px;top:521.00px;font-size:10.5px;font-weight:400;font-family:'Liberation Sans';letter-spacing:0.12px;font-style:normal;color:#000;line-height:normal">AFILIADOS VARIOS -</div>
<div class="t" style="left:181.50px;top:521.00px;font-size:10.5px;font-weight:400;font-family:'Liberation Sans';letter-spacing:0.12px;font-style:normal;color:#000;line-height:normal">X-DAS-capital</div>
<div class="t" style="left:295.00px;top:521.00px;font-size:10.5px;font-weight:400;font-family:'Liberation Sans';letter-spacing:0.12px;font-style:normal;color:#000;line-height:normal">2017-08-01</div>
<div class="t" style="left:368.40px;top:521.00px;font-size:10.5px;font-weight:400;font-family:'Liberation Sans';letter-spacing:0.12px;font-style:normal;color:#000;line-height:normal">990103</div>
<div class="t" style="left:437.20px;top:521.00px;font-size:10.5px;font-weight:400;font-family:'Liberation Sans';letter-spacing:0.12px;font-style:normal;color:#000;line-height:normal">IMPUESTOS</div>
<div class="t" style="left:465.80px;width:200px;text-align:center;top:521.00px;font-size:10.5px;font-weight:400;font-family:'Liberation Sans';letter-spacing:0.12px;color:#000;line-height:normal">1</div>
<div class="t" style="left:532.00px;width:200px;text-align:center;top:521.00px;font-size:10.5px;font-weight:400;font-family:'Liberation Sans';letter-spacing:0.12px;color:#000;line-height:normal">658,82</div>
<div class="t" style="left:608.50px;width:200px;text-align:center;top:521.00px;font-size:10.5px;font-weight:400;font-family:'Liberation Sans';letter-spacing:0.12px;color:#000;line-height:normal">0,00</div>
<div class="t" style="left:891.00px;width:200px;text-align:center;top:521.00px;font-size:10.5px;font-weight:400;font-family:'Liberation Sans';letter-spacing:0.12px;color:#000;line-height:normal">658,82</div>
<div class="t" style="left:53.40px;top:537.80px;font-size:10.5px;font-weight:400;font-family:'Liberation Sans';letter-spacing:0.12px;font-style:normal;color:#000;line-height:normal">Nota:</div>
</div>
<div class="a" style="left:1576px;top:209px;width:17px;height:546px;background:linear-gradient(90deg,#d9d9d9,#f9f9f9)"></div>
<div class="a" style="left:1576px;top:209px;width:17px;height:18px;border:1px solid #c8c8c8;background:linear-gradient(90deg,#fdfdfd,#e8e8e8)"></div>
<svg class="a" style="left:1576px;top:209px" width="17" height="18" viewBox="0 0 17 18"><path d="M4,11 L8.5,6 L13,11 Z" fill="#222"/></svg>
<div class="a" style="left:1576px;top:265px;width:17px;height:343px;background:linear-gradient(90deg,#5e5e5e,#2e2e2e);border:1px solid #222"></div>
<svg class="a" style="left:1576px;top:428px" width="17" height="18" viewBox="1576 428 17 18"><path d="M1581,433.5 H1588 M1581,435.5 H1588 M1581,437.5 H1588 M1581,439.5 H1588" stroke="#a0a0a0" stroke-width="0.9"/></svg>
<div class="a" style="left:1576px;top:737px;width:17px;height:18px;border:1px solid #c8c8c8;background:linear-gradient(90deg,#fdfdfd,#e8e8e8)"></div>
<svg class="a" style="left:1576px;top:737px" width="17" height="18" viewBox="0 0 17 18"><path d="M4,6.5 L8.5,11.5 L13,6.5 Z" fill="#222"/></svg>
<div class="a" style="left:402px;top:755px;width:1174px;height:18px;background:linear-gradient(#dadada,#fafafa)"></div>
<div class="a" style="left:404px;top:755px;width:18px;height:17px;border:1px solid #c8c8c8;background:linear-gradient(#fdfdfd,#e8e8e8)"></div>
<svg class="a" style="left:404px;top:755px" width="18" height="17" viewBox="0 0 18 17"><path d="M11,4 L6,8.5 L11,13 Z" fill="#222"/></svg>
<div class="a" style="left:1558px;top:755px;width:18px;height:17px;border:1px solid #c8c8c8;background:linear-gradient(#fdfdfd,#e8e8e8)"></div>
<svg class="a" style="left:1558px;top:755px" width="18" height="17" viewBox="0 0 18 17"><path d="M7,4 L12,8.5 L7,13 Z" fill="#222"/></svg>
<div class="a" style="left:1576px;top:755px;width:17px;height:18px;background:#e0e0e0"></div>
<div class="a" style="left:402px;top:773px;width:1193px;height:1px;background:#8a8a8a"></div>
<div class="t" style="left:798.5px;width:400px;text-align:center;top:775.72px;font-size:10.25px;font-weight:700;color:#000;font-family:'Liberation Sans';line-height:normal;">Page 1 of 2</div>
<div class="a" style="left:390px;top:326px;width:2px;height:2px;background:#a0a0a0"></div>
<div class="a" style="left:390px;top:333px;width:2px;height:2px;background:#a0a0a0"></div>
<div class="a" style="left:390px;top:340px;width:2px;height:2px;background:#a0a0a0"></div>
<div class="a" style="left:390px;top:347px;width:2px;height:2px;background:#a0a0a0"></div>
<div class="a" style="left:390px;top:354px;width:2px;height:2px;background:#a0a0a0"></div>
<div class="a" style="left:390px;top:361px;width:2px;height:2px;background:#a0a0a0"></div>
<div class="a" style="left:390px;top:368px;width:2px;height:2px;background:#a0a0a0"></div>
<div class="a" style="left:390px;top:375px;width:2px;height:2px;background:#a0a0a0"></div>
<div class="a" style="left:390px;top:458px;width:2px;height:2px;background:#a0a0a0"></div>
<div class="a" style="left:390px;top:465px;width:2px;height:2px;background:#a0a0a0"></div>
<div class="a" style="left:390px;top:472px;width:2px;height:2px;background:#a0a0a0"></div>
<div class="a" style="left:390px;top:479px;width:2px;height:2px;background:#a0a0a0"></div>
<div class="a" style="left:390px;top:486px;width:2px;height:2px;background:#a0a0a0"></div>
<div class="a" style="left:390px;top:493px;width:2px;height:2px;background:#a0a0a0"></div>
<div class="a" style="left:390px;top:500px;width:2px;height:2px;background:#a0a0a0"></div>
<div class="a" style="left:390px;top:507px;width:2px;height:2px;background:#a0a0a0"></div>
<svg class="a" style="left:387px;top:398px" width="10" height="12" viewBox="0 0 10 12"><path d="M7.5,2 L2.5,6 L7.5,10 Z" fill="#fff" stroke="#aaa" stroke-width="0.8"/></svg>
<svg class="a" style="left:387px;top:425px" width="10" height="12" viewBox="0 0 10 12"><path d="M2.5,2 L7.5,6 L2.5,10 Z" fill="#fff" stroke="#aaa" stroke-width="0.8"/></svg>
<div class="a" style="left:397px;top:793px;width:1203px;height:41px;background:#e0e0e0;border-top:1px solid #f0f0f0"></div>
<div class="a" style="left:401px;top:797px;width:51px;height:33px;background:#e6e6ee"></div>
<div class="a" style="left:403px;top:799px;width:48px;height:30px;border:1.5px solid #f8c400;border-radius:4px;background:linear-gradient(#ececec,#e0e0e0)"></div>
<svg class="a" style="left:400px;top:795px" width="50" height="37" viewBox="400 795 50 37"><path d="M426.6,805 L432.2,815 Q426.8,818.5 421.4,815 Z" fill="#f0a020" stroke="#f0a020" stroke-width="0.5" stroke-linejoin="round"/><path d="M416,810 Q421.5,818 426.8,816.8 Q432,818 437.8,810" stroke="#f0a020" stroke-width="1" fill="none"/><path d="M418,821.6 L423.5,814.5 M435.6,821 L430,814.5" stroke="#f0a020" stroke-width="1"/></svg>
<div class="btn" style="left:458px;top:799px;width:39px;height:29px;background:linear-gradient(#fafafa,#e6e6e6)"></div>
<svg class="a" style="left:458px;top:799px" width="39" height="29" viewBox="458 799 39 29"><path d="M475,806 L467.2,813.9 L475,821.8 Z M485.3,806 L477.8,813.9 L485.3,821.8 Z" fill="#222" stroke="#222" stroke-width="1.8" stroke-linejoin="round"/></svg>
<div class="btn" style="left:502px;top:799px;width:40px;height:29px;background:linear-gradient(#fafafa,#e6e6e6)"></div>
<svg class="a" style="left:506px;top:800px" width="32" height="28" viewBox="506 800 32 28"><rect x="510.8" y="804.2" width="22.4" height="8" rx="0.8" fill="#f4f4f4" stroke="#444" stroke-width="1"/><rect x="510.4" y="803.7" width="23.2" height="1.7" fill="#000"/><rect x="512" y="806.5" width="4" height="4.5" fill="#999"/><rect x="528" y="806.5" width="4" height="4.5" fill="#888"/><rect x="510.8" y="815.6" width="22.4" height="7.8" rx="0.8" fill="#f4f4f4" stroke="#444" stroke-width="1"/><rect x="510.4" y="815.3" width="23.2" height="1.6" fill="#000"/><rect x="512" y="817.5" width="3.5" height="5" fill="#aaa"/><rect x="528.5" y="817.5" width="3.5" height="5" fill="#888"/><rect x="515.2" y="809.4" width="13.3" height="1.8" fill="#ee0a0a"/><rect x="518.8" y="806.6" width="5.9" height="3" fill="none" stroke="#ee0a0a" stroke-width="1.3"/><path d="M516.9,811.2 H526.8 L526.3,821.4 H517.4 Z" fill="#d8d8d8" stroke="#ee0a0a" stroke-width="1.2" stroke-linejoin="round"/><path d="M520.2,811.5 V821 M523.4,811.5 V821" stroke="#ee0a0a" stroke-width="1.1"/></svg>
<div class="btn" style="left:547px;top:799px;width:40px;height:29px;background:linear-gradient(#fafafa,#e6e6e6)"></div>
<svg class="a" style="left:547px;top:799px" width="40" height="29" viewBox="0 0 40 29"><rect x="8.5" y="5.5" width="23" height="19" fill="#f4f6fa" stroke="#3050a0" stroke-width="1.3"/><rect x="8.5" y="5.5" width="23" height="2.5" fill="#4a70c0"/><path d="M13,12 C15,10 17,11 19,12 L18,16.5 C16,15.5 14,15.5 12,16.5 Z" fill="#e84020"/><path d="M20,12 C22,13 24,13 26,11.5 L25,16 C23,17.5 21,17 19,16.5 Z" fill="#30a030"/><path d="M12,17 C14,16 16,16 18,17 L17,21.5 C15,20.5 13,20.5 11,21.5 Z" fill="#2060e0"/><path d="M19,17 C21,18 23,18 25,16.5 L24,21 C22,22.5 20,22 18,21.5 Z" fill="#f0c010"/></svg>
<div class="btn" style="left:592px;top:799px;width:40px;height:29px;background:linear-gradient(#fafafa,#e6e6e6)"></div>
<svg class="a" style="left:592px;top:799px" width="40" height="29" viewBox="0 0 40 29"><circle cx="22.5" cy="10.5" r="4.8" fill="none" stroke="#2e9e4a" stroke-width="3"/><path d="M19,14 L11,23.5 M12.5,21.5 L15,24 M14.5,19 L17,21.5" stroke="#2e9e4a" stroke-width="3" stroke-linecap="round"/></svg>
<div class="btn" style="left:642px;top:798px;width:120px;height:29px;background:linear-gradient(#fafafa,#e6e6e6)"></div>
<div class="t" style="left:501.5px;width:400px;text-align:center;top:807.23px;font-size:9.25px;font-weight:400;color:#000;font-family:'Liberation Sans';line-height:normal;">Prestador</div>
<div class="btn" style="left:767px;top:798px;width:120px;height:29px;background:linear-gradient(#fafafa,#e6e6e6)"></div>
<div class="t" style="left:626.5px;width:400px;text-align:center;top:807.23px;font-size:9.25px;font-weight:400;color:#000;font-family:'Liberation Sans';line-height:normal;">Regeneracion Consum...</div>
<div class="btn" style="left:892px;top:798px;width:120px;height:29px;background:linear-gradient(#fafafa,#e6e6e6)"></div>
<div class="t" style="left:751.5px;width:400px;text-align:center;top:807.23px;font-size:9.25px;font-weight:400;color:#000;font-family:'Liberation Sans';line-height:normal;">Listado de liquidacione...</div>
<div class="btn" style="left:1017px;top:798px;width:120px;height:29px;background:linear-gradient(#e2e2e2,#ececec)"></div>
<div class="t" style="left:878.0px;width:400px;text-align:center;top:808.53px;font-size:9.25px;font-weight:400;color:#000;font-family:'Liberation Sans';line-height:normal;">Listado por Liquidación</div>
<div class="a" style="left:1572px;top:798px;width:23px;height:25px;background:linear-gradient(#eeeeee,#dadada)"></div>
<div class="t" style="left:1579px;top:802.68px;font-size:13.5px;font-weight:400;color:#000;font-family:'Liberation Sans';line-height:normal;">&gt;</div>
</body></html>
